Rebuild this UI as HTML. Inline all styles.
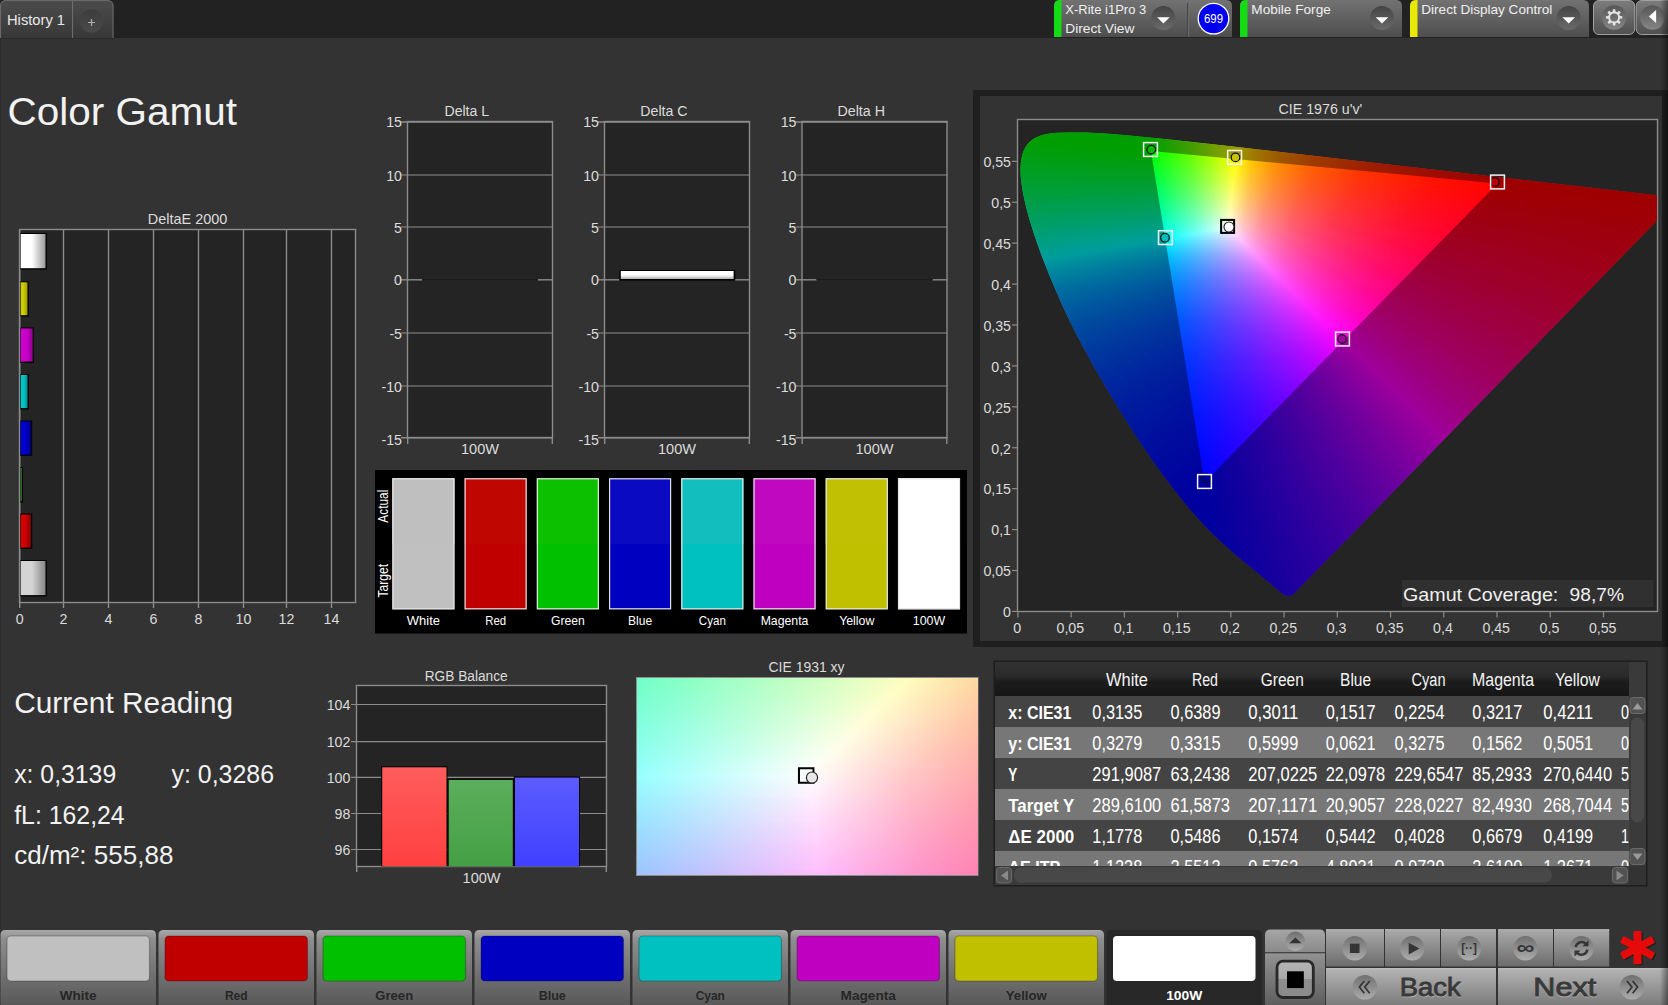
<!DOCTYPE html>
<html><head><meta charset="utf-8"><title>Color Gamut</title>
<style>
html,body{margin:0;padding:0;background:#333333;}
body{width:1668px;height:1005px;position:relative;overflow:hidden;font-family:"Liberation Sans",sans-serif;}
svg{position:absolute;left:0;top:0;font-family:"Liberation Sans",sans-serif;}
.cie{position:absolute;overflow:hidden;}
.cie i{display:block;}

</style></head><body>
<svg width="1668" height="1005" viewBox="0 0 1668 1005">
<defs><linearGradient id="tab" x1="0" y1="0" x2="0" y2="1"><stop offset="0" stop-color="#4c4c4c"/><stop offset="1" stop-color="#383838"/></linearGradient><radialGradient id="plus" cx="0.5" cy="0.3" r="0.7"><stop offset="0" stop-color="#3a3a3a"/><stop offset="1" stop-color="#444444"/></radialGradient><linearGradient id="plusl" x1="0" y1="0" x2="0" y2="1"><stop offset="0" stop-color="#3c3c3c"/><stop offset="1" stop-color="#4a4a4a"/></linearGradient><linearGradient id="btn" x1="0" y1="0" x2="0" y2="1"><stop offset="0" stop-color="#727272"/><stop offset="1" stop-color="#4e4e4e"/></linearGradient><linearGradient id="dd" x1="0" y1="0" x2="0" y2="1"><stop offset="0" stop-color="#444444"/><stop offset="1" stop-color="#6a6a6a"/></linearGradient><linearGradient id="btn2" x1="0" y1="0" x2="0" y2="1"><stop offset="0" stop-color="#7c7c7c"/><stop offset="1" stop-color="#505050"/></linearGradient><linearGradient id="rb" x1="0" y1="0" x2="0" y2="1"><stop offset="0" stop-color="#565656"/><stop offset="1" stop-color="#868686"/></linearGradient><linearGradient id="b0" x1="0" y1="0" x2="1" y2="0"><stop offset="0" stop-color="#ffffff"/><stop offset="0.45" stop-color="#ffffff"/><stop offset="1" stop-color="#9a9a9a"/></linearGradient><linearGradient id="b1" x1="0" y1="0" x2="1" y2="0"><stop offset="0" stop-color="#cccc00"/><stop offset="0.45" stop-color="#cccc00"/><stop offset="1" stop-color="#989800"/></linearGradient><linearGradient id="b2" x1="0" y1="0" x2="1" y2="0"><stop offset="0" stop-color="#cc00cc"/><stop offset="0.45" stop-color="#cc00cc"/><stop offset="1" stop-color="#900090"/></linearGradient><linearGradient id="b3" x1="0" y1="0" x2="1" y2="0"><stop offset="0" stop-color="#00c4c4"/><stop offset="0.45" stop-color="#00c4c4"/><stop offset="1" stop-color="#009090"/></linearGradient><linearGradient id="b4" x1="0" y1="0" x2="1" y2="0"><stop offset="0" stop-color="#0000d0"/><stop offset="0.45" stop-color="#0000d0"/><stop offset="1" stop-color="#000088"/></linearGradient><linearGradient id="b5" x1="0" y1="0" x2="1" y2="0"><stop offset="0" stop-color="#50a850"/><stop offset="0.45" stop-color="#50a850"/><stop offset="1" stop-color="#388838"/></linearGradient><linearGradient id="b6" x1="0" y1="0" x2="1" y2="0"><stop offset="0" stop-color="#d00000"/><stop offset="0.45" stop-color="#d00000"/><stop offset="1" stop-color="#880000"/></linearGradient><linearGradient id="b7" x1="0" y1="0" x2="1" y2="0"><stop offset="0" stop-color="#d4d4d4"/><stop offset="0.45" stop-color="#d4d4d4"/><stop offset="1" stop-color="#868686"/></linearGradient><linearGradient id="dc" x1="0" y1="0" x2="0" y2="1"><stop offset="0" stop-color="#ffffff"/><stop offset="0.5" stop-color="#ffffff"/><stop offset="1" stop-color="#b0b0b0"/></linearGradient><linearGradient id="rr" x1="0" y1="0" x2="0" y2="1"><stop offset="0" stop-color="#ff5c5c"/><stop offset="1" stop-color="#ff4040"/></linearGradient><linearGradient id="gg" x1="0" y1="0" x2="0" y2="1"><stop offset="0" stop-color="#5cae5c"/><stop offset="1" stop-color="#44a044"/></linearGradient><linearGradient id="bb" x1="0" y1="0" x2="0" y2="1"><stop offset="0" stop-color="#5c5cff"/><stop offset="1" stop-color="#4040ff"/></linearGradient><linearGradient id="th" x1="0" y1="0" x2="0" y2="1"><stop offset="0" stop-color="#323232"/><stop offset="0.42" stop-color="#2a2a2a"/><stop offset="0.58" stop-color="#1c1c1c"/><stop offset="1" stop-color="#161616"/></linearGradient><linearGradient id="bb1" x1="0" y1="0" x2="0" y2="1"><stop offset="0" stop-color="#a8a8a8"/><stop offset="0.12" stop-color="#8e8e8e"/><stop offset="1" stop-color="#585858"/></linearGradient><linearGradient id="cb" x1="0" y1="0" x2="0" y2="1"><stop offset="0" stop-color="#aaaaaa"/><stop offset="1" stop-color="#6c6c6c"/></linearGradient><linearGradient id="cbt" x1="0" y1="0" x2="0" y2="1"><stop offset="0" stop-color="#a6a6a6"/><stop offset="1" stop-color="#8a8a8a"/></linearGradient><linearGradient id="cb2" x1="0" y1="0" x2="0" y2="1"><stop offset="0" stop-color="#929292"/><stop offset="1" stop-color="#5e5e5e"/></linearGradient><linearGradient id="ic" x1="0" y1="0" x2="0" y2="1"><stop offset="0" stop-color="#707070"/><stop offset="1" stop-color="#acacac"/></linearGradient><linearGradient id="si" x1="0" y1="0" x2="0" y2="1"><stop offset="0" stop-color="#b6b6b6"/><stop offset="0.5" stop-color="#a6a6a6"/><stop offset="0.5" stop-color="#8e8e8e"/><stop offset="1" stop-color="#8a8a8a"/></linearGradient><linearGradient id="bn" x1="0" y1="0" x2="0" y2="1"><stop offset="0" stop-color="#b4b4b4"/><stop offset="1" stop-color="#7a7a7a"/></linearGradient><linearGradient id="es" x1="0" y1="0" x2="1" y2="0"><stop offset="0" stop-color="#000" stop-opacity="0"/><stop offset="1" stop-color="#000" stop-opacity=".42"/></linearGradient></defs>
<rect x="0" y="0" width="1668" height="38" fill="#222222" />
<path d="M0 38V6Q0 0 6 0H107Q113.5 0 113.5 6V38Z" fill="url(#tab)"/>
<path d="M.5 38V6Q.5 .5 6 .5H107Q113 .5 113 6V38" fill="none" stroke="#6a6a6a" stroke-width="1"/>
<line x1="72.5" y1="1" x2="72.5" y2="38" stroke="#6e6e6e" stroke-width="1" />
<line x1="0" y1="38.5" x2="114" y2="38.5" stroke="#2a2a2a" stroke-width="1" />
<text x="7" y="25" font-size="14.5" fill="#e8e8e8" textLength="58" lengthAdjust="spacingAndGlyphs" >History 1</text>
<circle cx="91.5" cy="21" r="11.5" fill="url(#plusl)"/>
<path d="M88 22.5h7M91.5 19v7" stroke="#b0b0b0" stroke-width="1.2" fill="none"/>
<path d="M1054 37V6Q1054 0 1060 0H1226Q1232 0 1232 6V37Z" fill="url(#btn)"/>
<path d="M1054 37V6Q1054 0 1060 0H1061.5V37Z" fill="#14dc14"/>
<circle cx="1163.4" cy="18" r="12" fill="url(#dd)"/>
<path d="M1157.1000000000001 17.2h12.6l-6.3 6.2z" fill="#ffffff"/>
<text x="1065.3" y="13.6" font-size="13" fill="#f0f0f0" textLength="81" lengthAdjust="spacingAndGlyphs" >X-Rite i1Pro 3</text>
<text x="1065.3" y="33" font-size="13" fill="#f0f0f0" textLength="69" lengthAdjust="spacingAndGlyphs" >Direct View</text>
<line x1="1187.5" y1="3" x2="1187.5" y2="37" stroke="#444444" stroke-width="1" />
<line x1="1188.5" y1="3" x2="1188.5" y2="37" stroke="#6c6c6c" stroke-width="1" />
<circle cx="1213.5" cy="18.6" r="15.3" fill="#0000ee" stroke="#ffffff" stroke-width="1.3"/>
<text x="1213.5" y="23" font-size="12" fill="#ffffff" text-anchor="middle" textLength="19" lengthAdjust="spacingAndGlyphs" >699</text>
<path d="M1240 37V6Q1240 0 1246 0H1396Q1402 0 1402 6V37Z" fill="url(#btn)"/>
<path d="M1240 37V6Q1240 0 1246 0H1247.5V37Z" fill="#14dc14"/>
<circle cx="1382" cy="18" r="12" fill="url(#dd)"/>
<path d="M1375.7 17.2h12.6l-6.3 6.2z" fill="#ffffff"/>
<text x="1251.3" y="13.6" font-size="13" fill="#f0f0f0" textLength="79.5" lengthAdjust="spacingAndGlyphs" >Mobile Forge</text>
<path d="M1410 37V6Q1410 0 1416 0H1583Q1589 0 1589 6V37Z" fill="url(#btn)"/>
<path d="M1410 37V6Q1410 0 1416 0H1417.5V37Z" fill="#e8e800"/>
<circle cx="1568.7" cy="18" r="12" fill="url(#dd)"/>
<path d="M1562.4 17.2h12.6l-6.3 6.2z" fill="#ffffff"/>
<text x="1421.3" y="13.6" font-size="13" fill="#f0f0f0" textLength="131" lengthAdjust="spacingAndGlyphs" >Direct Display Control</text>
<rect x="1593.5" y=".5" width="41.2" height="34" rx="5.5" fill="url(#btn2)" stroke="#a0a0a0" stroke-width="1"/>
<rect x="1636.2" y=".5" width="41" height="34" rx="5.5" fill="url(#btn2)" stroke="#a0a0a0" stroke-width="1"/>
<circle cx="1614.1" cy="17.5" r="12.2" fill="url(#rb)"/>
<circle cx="1652.4" cy="17.5" r="12.2" fill="url(#rb)"/>
<path d="M1619.93 16L1622.32 16.23L1622.32 18.57L1619.93 18.8L1619.22 20.53L1620.74 22.38L1619.08 24.04L1617.23 22.52L1615.5 23.23L1615.27 25.62L1612.93 25.62L1612.7 23.23L1610.97 22.52L1609.12 24.04L1607.46 22.38L1608.98 20.53L1608.27 18.8L1605.88 18.57L1605.88 16.23L1608.27 16L1608.98 14.27L1607.46 12.42L1609.12 10.76L1610.97 12.28L1612.7 11.57L1612.93 9.18L1615.27 9.18L1615.5 11.57L1617.23 12.28L1619.08 10.76L1620.74 12.42L1619.22 14.27ZM1618.1 17.4A4 4 0 1 0 1610.1 17.4A4 4 0 1 0 1618.1 17.4Z" fill="#e4e4e4" fill-rule="evenodd"/>
<path d="M1648.9 16.5l7.2-6.6v13.2z" fill="#ffffff"/>
<text x="7.5" y="125.2" font-size="38" fill="#f2f2f2" textLength="229.5" lengthAdjust="spacingAndGlyphs" >Color Gamut</text>
<text x="187.6" y="224.3" font-size="13.9" fill="#dcdcdc" text-anchor="middle" textLength="79.5" lengthAdjust="spacingAndGlyphs" >DeltaE 2000</text>
<rect x="19" y="229" width="337" height="374" fill="#242424" />
<line x1="63.5" y1="229" x2="63.5" y2="608" stroke="#8c8c8c" stroke-width="1.4" />
<line x1="108.5" y1="229" x2="108.5" y2="608" stroke="#8c8c8c" stroke-width="1.4" />
<line x1="153.5" y1="229" x2="153.5" y2="608" stroke="#8c8c8c" stroke-width="1.4" />
<line x1="198.5" y1="229" x2="198.5" y2="608" stroke="#8c8c8c" stroke-width="1.4" />
<line x1="243.5" y1="229" x2="243.5" y2="608" stroke="#8c8c8c" stroke-width="1.4" />
<line x1="286.5" y1="229" x2="286.5" y2="608" stroke="#8c8c8c" stroke-width="1.4" />
<line x1="331.5" y1="229" x2="331.5" y2="608" stroke="#8c8c8c" stroke-width="1.4" />
<line x1="19.7" y1="229" x2="19.7" y2="608" stroke="#8c8c8c" stroke-width="1.4" />
<rect x="19.5" y="229.5" width="336" height="373" fill="none" stroke="#8c8c8c" stroke-width="1.4"/>
<text x="19.7" y="624.3" font-size="14.2" fill="#dcdcdc" text-anchor="middle" >0</text>
<text x="63.5" y="624.3" font-size="14.2" fill="#dcdcdc" text-anchor="middle" >2</text>
<text x="108.5" y="624.3" font-size="14.2" fill="#dcdcdc" text-anchor="middle" >4</text>
<text x="153.5" y="624.3" font-size="14.2" fill="#dcdcdc" text-anchor="middle" >6</text>
<text x="198.5" y="624.3" font-size="14.2" fill="#dcdcdc" text-anchor="middle" >8</text>
<text x="243.5" y="624.3" font-size="14.2" fill="#dcdcdc" text-anchor="middle" >10</text>
<text x="286.5" y="624.3" font-size="14.2" fill="#dcdcdc" text-anchor="middle" >12</text>
<text x="331.5" y="624.3" font-size="14.2" fill="#dcdcdc" text-anchor="middle" >14</text>
<rect x="20.4" y="233" width="26.4" height="36.6" fill="#000000" />
<rect x="20.7" y="234" width="24.8" height="34.2" fill="url(#b0)" />
<rect x="20.4" y="281.3" width="8.4" height="35.3" fill="#000000" />
<rect x="20.7" y="282.3" width="6.8" height="32.9" fill="url(#b1)" />
<rect x="20.4" y="327.5" width="13.6" height="35.5" fill="#000000" />
<rect x="20.7" y="328.5" width="12" height="33.1" fill="url(#b2)" />
<rect x="20.4" y="374" width="8.4" height="35.5" fill="#000000" />
<rect x="20.7" y="375" width="6.8" height="33.1" fill="url(#b3)" />
<rect x="20.4" y="420.5" width="11.8" height="35.5" fill="#000000" />
<rect x="20.7" y="421.5" width="10.2" height="33.1" fill="url(#b4)" />
<rect x="20.4" y="467" width="2.6" height="35.5" fill="#000000" />
<rect x="20.7" y="468" width="1" height="33.1" fill="url(#b5)" />
<rect x="20.4" y="513.5" width="11.8" height="35.5" fill="#000000" />
<rect x="20.7" y="514.5" width="10.2" height="33.1" fill="url(#b6)" />
<rect x="20.4" y="560" width="26.4" height="36.5" fill="#000000" />
<rect x="20.7" y="561" width="24.8" height="34.1" fill="url(#b7)" />
<rect x="407" y="121" width="146" height="317" fill="#242424" />
<line x1="401" y1="122" x2="553" y2="122" stroke="#8c8c8c" stroke-width="1.4" />
<text x="402" y="127" font-size="14.2" fill="#dcdcdc" text-anchor="end" >15</text>
<line x1="401" y1="175" x2="553" y2="175" stroke="#8c8c8c" stroke-width="1.2" />
<text x="402" y="180.5" font-size="14.2" fill="#dcdcdc" text-anchor="end" >10</text>
<line x1="401" y1="227" x2="553" y2="227" stroke="#8c8c8c" stroke-width="1.2" />
<text x="402" y="232.5" font-size="14.2" fill="#dcdcdc" text-anchor="end" >5</text>
<line x1="401" y1="279.8" x2="422" y2="279.8" stroke="#8c8c8c" stroke-width="1.4" />
<line x1="538" y1="279.8" x2="553" y2="279.8" stroke="#8c8c8c" stroke-width="1.4" />
<line x1="422" y1="279.5" x2="538" y2="279.5" stroke="#1c1c1c" stroke-width="1.2" />
<text x="402" y="285.3" font-size="14.2" fill="#dcdcdc" text-anchor="end" >0</text>
<line x1="401" y1="333" x2="553" y2="333" stroke="#8c8c8c" stroke-width="1.2" />
<text x="402" y="338.5" font-size="14.2" fill="#dcdcdc" text-anchor="end" >-5</text>
<line x1="401" y1="386" x2="553" y2="386" stroke="#8c8c8c" stroke-width="1.2" />
<text x="402" y="391.5" font-size="14.2" fill="#dcdcdc" text-anchor="end" >-10</text>
<line x1="401" y1="437.8" x2="553" y2="437.8" stroke="#8c8c8c" stroke-width="1.4" />
<text x="402" y="444.8" font-size="14.2" fill="#dcdcdc" text-anchor="end" >-15</text>
<rect x="407.5" y="121.5" width="145" height="316" fill="none" stroke="#8c8c8c" stroke-width="1.4"/>
<line x1="407.7" y1="438" x2="407.7" y2="444" stroke="#8c8c8c" stroke-width="1.4" />
<line x1="552.3" y1="438" x2="552.3" y2="444" stroke="#8c8c8c" stroke-width="1.4" />
<text x="466.8" y="116.3" font-size="14" fill="#dcdcdc" text-anchor="middle" textLength="44.7" lengthAdjust="spacingAndGlyphs" >Delta L</text>
<text x="480" y="454" font-size="14.5" fill="#dcdcdc" text-anchor="middle" textLength="38" lengthAdjust="spacingAndGlyphs" >100W</text>
<rect x="604" y="121" width="146" height="317" fill="#242424" />
<line x1="598" y1="122" x2="750" y2="122" stroke="#8c8c8c" stroke-width="1.4" />
<text x="599" y="127" font-size="14.2" fill="#dcdcdc" text-anchor="end" >15</text>
<line x1="598" y1="175" x2="750" y2="175" stroke="#8c8c8c" stroke-width="1.2" />
<text x="599" y="180.5" font-size="14.2" fill="#dcdcdc" text-anchor="end" >10</text>
<line x1="598" y1="227" x2="750" y2="227" stroke="#8c8c8c" stroke-width="1.2" />
<text x="599" y="232.5" font-size="14.2" fill="#dcdcdc" text-anchor="end" >5</text>
<line x1="598" y1="279.8" x2="619" y2="279.8" stroke="#8c8c8c" stroke-width="1.4" />
<line x1="735" y1="279.8" x2="750" y2="279.8" stroke="#8c8c8c" stroke-width="1.4" />
<line x1="619" y1="279.5" x2="735" y2="279.5" stroke="#1c1c1c" stroke-width="1.2" />
<text x="599" y="285.3" font-size="14.2" fill="#dcdcdc" text-anchor="end" >0</text>
<line x1="598" y1="333" x2="750" y2="333" stroke="#8c8c8c" stroke-width="1.2" />
<text x="599" y="338.5" font-size="14.2" fill="#dcdcdc" text-anchor="end" >-5</text>
<line x1="598" y1="386" x2="750" y2="386" stroke="#8c8c8c" stroke-width="1.2" />
<text x="599" y="391.5" font-size="14.2" fill="#dcdcdc" text-anchor="end" >-10</text>
<line x1="598" y1="437.8" x2="750" y2="437.8" stroke="#8c8c8c" stroke-width="1.4" />
<text x="599" y="444.8" font-size="14.2" fill="#dcdcdc" text-anchor="end" >-15</text>
<rect x="604.5" y="121.5" width="145" height="316" fill="none" stroke="#8c8c8c" stroke-width="1.4"/>
<line x1="604.7" y1="438" x2="604.7" y2="444" stroke="#8c8c8c" stroke-width="1.4" />
<line x1="749.3" y1="438" x2="749.3" y2="444" stroke="#8c8c8c" stroke-width="1.4" />
<text x="663.9" y="116.3" font-size="14" fill="#dcdcdc" text-anchor="middle" textLength="47.2" lengthAdjust="spacingAndGlyphs" >Delta C</text>
<text x="677" y="454" font-size="14.5" fill="#dcdcdc" text-anchor="middle" textLength="38" lengthAdjust="spacingAndGlyphs" >100W</text>
<rect x="801.5" y="121" width="146" height="317" fill="#242424" />
<line x1="795.5" y1="122" x2="947.5" y2="122" stroke="#8c8c8c" stroke-width="1.4" />
<text x="796.5" y="127" font-size="14.2" fill="#dcdcdc" text-anchor="end" >15</text>
<line x1="795.5" y1="175" x2="947.5" y2="175" stroke="#8c8c8c" stroke-width="1.2" />
<text x="796.5" y="180.5" font-size="14.2" fill="#dcdcdc" text-anchor="end" >10</text>
<line x1="795.5" y1="227" x2="947.5" y2="227" stroke="#8c8c8c" stroke-width="1.2" />
<text x="796.5" y="232.5" font-size="14.2" fill="#dcdcdc" text-anchor="end" >5</text>
<line x1="795.5" y1="279.8" x2="816.5" y2="279.8" stroke="#8c8c8c" stroke-width="1.4" />
<line x1="932.5" y1="279.8" x2="947.5" y2="279.8" stroke="#8c8c8c" stroke-width="1.4" />
<line x1="816.5" y1="279.5" x2="932.5" y2="279.5" stroke="#1c1c1c" stroke-width="1.2" />
<text x="796.5" y="285.3" font-size="14.2" fill="#dcdcdc" text-anchor="end" >0</text>
<line x1="795.5" y1="333" x2="947.5" y2="333" stroke="#8c8c8c" stroke-width="1.2" />
<text x="796.5" y="338.5" font-size="14.2" fill="#dcdcdc" text-anchor="end" >-5</text>
<line x1="795.5" y1="386" x2="947.5" y2="386" stroke="#8c8c8c" stroke-width="1.2" />
<text x="796.5" y="391.5" font-size="14.2" fill="#dcdcdc" text-anchor="end" >-10</text>
<line x1="795.5" y1="437.8" x2="947.5" y2="437.8" stroke="#8c8c8c" stroke-width="1.4" />
<text x="796.5" y="444.8" font-size="14.2" fill="#dcdcdc" text-anchor="end" >-15</text>
<rect x="802" y="121.5" width="145" height="316" fill="none" stroke="#8c8c8c" stroke-width="1.4"/>
<line x1="802.2" y1="438" x2="802.2" y2="444" stroke="#8c8c8c" stroke-width="1.4" />
<line x1="946.8" y1="438" x2="946.8" y2="444" stroke="#8c8c8c" stroke-width="1.4" />
<text x="861.2" y="116.3" font-size="14" fill="#dcdcdc" text-anchor="middle" textLength="47.5" lengthAdjust="spacingAndGlyphs" >Delta H</text>
<text x="874.5" y="454" font-size="14.5" fill="#dcdcdc" text-anchor="middle" textLength="38" lengthAdjust="spacingAndGlyphs" >100W</text>
<rect x="619.5" y="270" width="115.8" height="10.6" fill="#000000" />
<rect x="620.8" y="271" width="112.8" height="8" fill="url(#dc)" />
<rect x="375" y="470" width="592" height="163.5" fill="#000000" />
<rect x="392.4" y="478.3" width="62" height="131" fill="#c0c0c0" />
<rect x="392.4" y="478.3" width="62" height="65.7" fill="#c0bfbf" />
<rect x="392.9" y="478.8" width="61" height="130" fill="none" stroke="#e4e4e4" stroke-width="1.2"/>
<text x="423.4" y="625" font-size="13.5" fill="#ffffff" text-anchor="middle" textLength="33.1" lengthAdjust="spacingAndGlyphs" >White</text>
<rect x="464.63" y="478.3" width="62" height="131" fill="#c00000" />
<rect x="464.63" y="478.3" width="62" height="65.7" fill="#c00600" />
<rect x="465.13" y="478.8" width="61" height="130" fill="none" stroke="#e4e4e4" stroke-width="1.2"/>
<text x="495.63" y="625" font-size="13.5" fill="#ffffff" text-anchor="middle" textLength="20.9" lengthAdjust="spacingAndGlyphs" >Red</text>
<rect x="536.86" y="478.3" width="62" height="131" fill="#00c000" />
<rect x="536.86" y="478.3" width="62" height="65.7" fill="#0cc000" />
<rect x="537.36" y="478.8" width="61" height="130" fill="none" stroke="#e4e4e4" stroke-width="1.2"/>
<text x="567.86" y="625" font-size="13.5" fill="#ffffff" text-anchor="middle" textLength="33.8" lengthAdjust="spacingAndGlyphs" >Green</text>
<rect x="609.09" y="478.3" width="62" height="131" fill="#0000c0" />
<rect x="609.09" y="478.3" width="62" height="65.7" fill="#0a0ac2" />
<rect x="609.59" y="478.8" width="61" height="130" fill="none" stroke="#e4e4e4" stroke-width="1.2"/>
<text x="640.09" y="625" font-size="13.5" fill="#ffffff" text-anchor="middle" textLength="24.1" lengthAdjust="spacingAndGlyphs" >Blue</text>
<rect x="681.32" y="478.3" width="62" height="131" fill="#00c0c0" />
<rect x="681.32" y="478.3" width="62" height="65.7" fill="#12bebe" />
<rect x="681.82" y="478.8" width="61" height="130" fill="none" stroke="#e4e4e4" stroke-width="1.2"/>
<text x="712.32" y="625" font-size="13.5" fill="#ffffff" text-anchor="middle" textLength="27" lengthAdjust="spacingAndGlyphs" >Cyan</text>
<rect x="753.55" y="478.3" width="62" height="131" fill="#c000c0" />
<rect x="753.55" y="478.3" width="62" height="65.7" fill="#c008c0" />
<rect x="754.05" y="478.8" width="61" height="130" fill="none" stroke="#e4e4e4" stroke-width="1.2"/>
<text x="784.55" y="625" font-size="13.5" fill="#ffffff" text-anchor="middle" textLength="47.8" lengthAdjust="spacingAndGlyphs" >Magenta</text>
<rect x="825.78" y="478.3" width="62" height="131" fill="#c0c000" />
<rect x="825.78" y="478.3" width="62" height="65.7" fill="#c2c002" />
<rect x="826.28" y="478.8" width="61" height="130" fill="none" stroke="#e4e4e4" stroke-width="1.2"/>
<text x="856.78" y="625" font-size="13.5" fill="#ffffff" text-anchor="middle" textLength="35.3" lengthAdjust="spacingAndGlyphs" >Yellow</text>
<rect x="898.01" y="478.3" width="62" height="131" fill="#ffffff" />
<rect x="898.01" y="478.3" width="62" height="65.7" fill="#ffffff" />
<rect x="898.51" y="478.8" width="61" height="130" fill="none" stroke="#e4e4e4" stroke-width="1.2"/>
<text x="929.01" y="625" font-size="13.5" fill="#ffffff" text-anchor="middle" textLength="32.4" lengthAdjust="spacingAndGlyphs" >100W</text>
<text transform="translate(388.3,522.7) rotate(-90)" font-size="14" fill="#ffffff" textLength="33" lengthAdjust="spacingAndGlyphs">Actual</text>
<text transform="translate(388.3,597.5) rotate(-90)" font-size="14" fill="#ffffff" textLength="33.5" lengthAdjust="spacingAndGlyphs">Target</text>
<text x="14.2" y="713.3" font-size="29.5" fill="#f2f2f2" textLength="219" lengthAdjust="spacingAndGlyphs" >Current Reading</text>
<text x="14.2" y="783.2" font-size="25" fill="#f2f2f2" textLength="102" lengthAdjust="spacingAndGlyphs" >x: 0,3139</text>
<text x="171.5" y="783.2" font-size="25" fill="#f2f2f2" textLength="102.5" lengthAdjust="spacingAndGlyphs" >y: 0,3286</text>
<text x="14.2" y="823.8" font-size="25" fill="#f2f2f2" textLength="110.5" lengthAdjust="spacingAndGlyphs" >fL: 162,24</text>
<text x="14.2" y="864" font-size="25" fill="#f2f2f2" textLength="159.2" lengthAdjust="spacingAndGlyphs" >cd/m²: 555,88</text>
<text x="466.2" y="680.7" font-size="14" fill="#dcdcdc" text-anchor="middle" textLength="83" lengthAdjust="spacingAndGlyphs" >RGB Balance</text>
<rect x="356" y="685" width="251" height="182" fill="#242424" />
<line x1="351" y1="704.5" x2="607" y2="704.5" stroke="#8c8c8c" stroke-width="1.2" />
<text x="350.3" y="710" font-size="14.2" fill="#dcdcdc" text-anchor="end" >104</text>
<line x1="351" y1="741.7" x2="607" y2="741.7" stroke="#8c8c8c" stroke-width="1.2" />
<text x="350.3" y="747.2" font-size="14.2" fill="#dcdcdc" text-anchor="end" >102</text>
<line x1="351" y1="777.4" x2="607" y2="777.4" stroke="#8c8c8c" stroke-width="1.2" />
<text x="350.3" y="782.9" font-size="14.2" fill="#dcdcdc" text-anchor="end" >100</text>
<line x1="351" y1="813.5" x2="607" y2="813.5" stroke="#8c8c8c" stroke-width="1.2" />
<text x="350.3" y="819" font-size="14.2" fill="#dcdcdc" text-anchor="end" >98</text>
<line x1="351" y1="849.5" x2="607" y2="849.5" stroke="#8c8c8c" stroke-width="1.2" />
<text x="350.3" y="855" font-size="14.2" fill="#dcdcdc" text-anchor="end" >96</text>
<rect x="356.5" y="685.5" width="250" height="181" fill="none" stroke="#8c8c8c" stroke-width="1.4"/>
<line x1="356.7" y1="867" x2="356.7" y2="872" stroke="#8c8c8c" stroke-width="1.4" />
<line x1="606.3" y1="867" x2="606.3" y2="872" stroke="#8c8c8c" stroke-width="1.4" />
<rect x="381" y="766" width="66.5" height="100.3" fill="#000000" />
<rect x="382.2" y="767.3" width="64.3" height="99" fill="url(#rr)" />
<rect x="447.5" y="778.6" width="66.3" height="87.7" fill="#000000" />
<rect x="448.7" y="779.9" width="64.1" height="86.4" fill="url(#gg)" />
<rect x="513.8" y="776.3" width="66.2" height="90" fill="#000000" />
<rect x="515" y="777.6" width="64" height="88.7" fill="url(#bb)" />
<text x="481.6" y="883.3" font-size="14.5" fill="#dcdcdc" text-anchor="middle" textLength="38" lengthAdjust="spacingAndGlyphs" >100W</text>
<text x="806.5" y="671.5" font-size="14" fill="#dcdcdc" text-anchor="middle" textLength="76" lengthAdjust="spacingAndGlyphs" >CIE 1931 xy</text>
<rect x="636" y="677" width="342.5" height="199" fill="#8c8c8c" />
<rect x="993.5" y="660.5" width="654" height="226" fill="#1e1e1e" />
<rect x="995" y="662" width="651" height="223" fill="#2b2b2b" />
<rect x="995" y="662" width="634" height="34" fill="url(#th)" />
<text x="1127" y="686" font-size="18" fill="#f4f4f4" text-anchor="middle" textLength="42" lengthAdjust="spacingAndGlyphs" >White</text>
<text x="1205" y="686" font-size="18" fill="#f4f4f4" text-anchor="middle" textLength="26" lengthAdjust="spacingAndGlyphs" >Red</text>
<text x="1282.3" y="686" font-size="18" fill="#f4f4f4" text-anchor="middle" textLength="43" lengthAdjust="spacingAndGlyphs" >Green</text>
<text x="1355.6" y="686" font-size="18" fill="#f4f4f4" text-anchor="middle" textLength="31" lengthAdjust="spacingAndGlyphs" >Blue</text>
<text x="1428.5" y="686" font-size="18" fill="#f4f4f4" text-anchor="middle" textLength="34" lengthAdjust="spacingAndGlyphs" >Cyan</text>
<text x="1503" y="686" font-size="18" fill="#f4f4f4" text-anchor="middle" textLength="62" lengthAdjust="spacingAndGlyphs" >Magenta</text>
<text x="1577.5" y="686" font-size="18" fill="#f4f4f4" text-anchor="middle" textLength="45" lengthAdjust="spacingAndGlyphs" >Yellow</text>
<clipPath id="tc"><rect x="995" y="696" width="634" height="170"/></clipPath>
<g clip-path="url(#tc)">
<rect x="995" y="696" width="635" height="31" fill="#444444" />
<text x="1008.3" y="719.4" font-size="19" fill="#ffffff" font-weight="bold" textLength="63" lengthAdjust="spacingAndGlyphs" >x: CIE31</text>
<text x="1092.3" y="719.4" font-size="19.6" fill="#ffffff" textLength="50" lengthAdjust="spacingAndGlyphs" >0,3135</text>
<text x="1170.5" y="719.4" font-size="19.6" fill="#ffffff" textLength="50" lengthAdjust="spacingAndGlyphs" >0,6389</text>
<text x="1248.3" y="719.4" font-size="19.6" fill="#ffffff" textLength="50" lengthAdjust="spacingAndGlyphs" >0,3011</text>
<text x="1325.7" y="719.4" font-size="19.6" fill="#ffffff" textLength="50" lengthAdjust="spacingAndGlyphs" >0,1517</text>
<text x="1394.5" y="719.4" font-size="19.6" fill="#ffffff" textLength="50" lengthAdjust="spacingAndGlyphs" >0,2254</text>
<text x="1472.3" y="719.4" font-size="19.6" fill="#ffffff" textLength="50" lengthAdjust="spacingAndGlyphs" >0,3217</text>
<text x="1543.2" y="719.4" font-size="19.6" fill="#ffffff" textLength="50" lengthAdjust="spacingAndGlyphs" >0,4211</text>
<text x="1621" y="719.4" font-size="19.6" fill="#ffffff" textLength="8" lengthAdjust="spacingAndGlyphs" >0</text>
<rect x="995" y="727" width="635" height="31" fill="#777777" />
<text x="1008.3" y="750.4" font-size="19" fill="#ffffff" font-weight="bold" textLength="63" lengthAdjust="spacingAndGlyphs" >y: CIE31</text>
<text x="1092.3" y="750.4" font-size="19.6" fill="#ffffff" textLength="50" lengthAdjust="spacingAndGlyphs" >0,3279</text>
<text x="1170.5" y="750.4" font-size="19.6" fill="#ffffff" textLength="50" lengthAdjust="spacingAndGlyphs" >0,3315</text>
<text x="1248.3" y="750.4" font-size="19.6" fill="#ffffff" textLength="50" lengthAdjust="spacingAndGlyphs" >0,5999</text>
<text x="1325.7" y="750.4" font-size="19.6" fill="#ffffff" textLength="50" lengthAdjust="spacingAndGlyphs" >0,0621</text>
<text x="1394.5" y="750.4" font-size="19.6" fill="#ffffff" textLength="50" lengthAdjust="spacingAndGlyphs" >0,3275</text>
<text x="1472.3" y="750.4" font-size="19.6" fill="#ffffff" textLength="50" lengthAdjust="spacingAndGlyphs" >0,1562</text>
<text x="1543.2" y="750.4" font-size="19.6" fill="#ffffff" textLength="50" lengthAdjust="spacingAndGlyphs" >0,5051</text>
<text x="1621" y="750.4" font-size="19.6" fill="#ffffff" textLength="8" lengthAdjust="spacingAndGlyphs" >0</text>
<rect x="995" y="758" width="635" height="31" fill="#444444" />
<text x="1008.3" y="781.4" font-size="19" fill="#ffffff" font-weight="bold" textLength="9" lengthAdjust="spacingAndGlyphs" >Y</text>
<text x="1092.3" y="781.4" font-size="19.6" fill="#ffffff" textLength="69" lengthAdjust="spacingAndGlyphs" >291,9087</text>
<text x="1170.5" y="781.4" font-size="19.6" fill="#ffffff" textLength="59.5" lengthAdjust="spacingAndGlyphs" >63,2438</text>
<text x="1248.3" y="781.4" font-size="19.6" fill="#ffffff" textLength="69" lengthAdjust="spacingAndGlyphs" >207,0225</text>
<text x="1325.7" y="781.4" font-size="19.6" fill="#ffffff" textLength="59.5" lengthAdjust="spacingAndGlyphs" >22,0978</text>
<text x="1394.5" y="781.4" font-size="19.6" fill="#ffffff" textLength="69" lengthAdjust="spacingAndGlyphs" >229,6547</text>
<text x="1472.3" y="781.4" font-size="19.6" fill="#ffffff" textLength="59.5" lengthAdjust="spacingAndGlyphs" >85,2933</text>
<text x="1543.2" y="781.4" font-size="19.6" fill="#ffffff" textLength="69" lengthAdjust="spacingAndGlyphs" >270,6440</text>
<text x="1621" y="781.4" font-size="19.6" fill="#ffffff" textLength="8" lengthAdjust="spacingAndGlyphs" >5</text>
<rect x="995" y="789" width="635" height="31" fill="#777777" />
<text x="1008.3" y="812.4" font-size="19" fill="#ffffff" font-weight="bold" textLength="66" lengthAdjust="spacingAndGlyphs" >Target Y</text>
<text x="1092.3" y="812.4" font-size="19.6" fill="#ffffff" textLength="69" lengthAdjust="spacingAndGlyphs" >289,6100</text>
<text x="1170.5" y="812.4" font-size="19.6" fill="#ffffff" textLength="59.5" lengthAdjust="spacingAndGlyphs" >61,5873</text>
<text x="1248.3" y="812.4" font-size="19.6" fill="#ffffff" textLength="69" lengthAdjust="spacingAndGlyphs" >207,1171</text>
<text x="1325.7" y="812.4" font-size="19.6" fill="#ffffff" textLength="59.5" lengthAdjust="spacingAndGlyphs" >20,9057</text>
<text x="1394.5" y="812.4" font-size="19.6" fill="#ffffff" textLength="69" lengthAdjust="spacingAndGlyphs" >228,0227</text>
<text x="1472.3" y="812.4" font-size="19.6" fill="#ffffff" textLength="59.5" lengthAdjust="spacingAndGlyphs" >82,4930</text>
<text x="1543.2" y="812.4" font-size="19.6" fill="#ffffff" textLength="69" lengthAdjust="spacingAndGlyphs" >268,7044</text>
<text x="1621" y="812.4" font-size="19.6" fill="#ffffff" textLength="8" lengthAdjust="spacingAndGlyphs" >5</text>
<rect x="995" y="820" width="635" height="31" fill="#444444" />
<text x="1008.3" y="843.4" font-size="19" fill="#ffffff" font-weight="bold" textLength="66" lengthAdjust="spacingAndGlyphs" >ΔE 2000</text>
<text x="1092.3" y="843.4" font-size="19.6" fill="#ffffff" textLength="50" lengthAdjust="spacingAndGlyphs" >1,1778</text>
<text x="1170.5" y="843.4" font-size="19.6" fill="#ffffff" textLength="50" lengthAdjust="spacingAndGlyphs" >0,5486</text>
<text x="1248.3" y="843.4" font-size="19.6" fill="#ffffff" textLength="50" lengthAdjust="spacingAndGlyphs" >0,1574</text>
<text x="1325.7" y="843.4" font-size="19.6" fill="#ffffff" textLength="50" lengthAdjust="spacingAndGlyphs" >0,5442</text>
<text x="1394.5" y="843.4" font-size="19.6" fill="#ffffff" textLength="50" lengthAdjust="spacingAndGlyphs" >0,4028</text>
<text x="1472.3" y="843.4" font-size="19.6" fill="#ffffff" textLength="50" lengthAdjust="spacingAndGlyphs" >0,6679</text>
<text x="1543.2" y="843.4" font-size="19.6" fill="#ffffff" textLength="50" lengthAdjust="spacingAndGlyphs" >0,4199</text>
<text x="1621" y="843.4" font-size="19.6" fill="#ffffff" textLength="8" lengthAdjust="spacingAndGlyphs" >1</text>
<rect x="995" y="851" width="635" height="31" fill="#777777" />
<text x="1008.3" y="874.4" font-size="19" fill="#ffffff" font-weight="bold" textLength="52" lengthAdjust="spacingAndGlyphs" >ΔE ITP</text>
<text x="1092.3" y="874.4" font-size="19.6" fill="#ffffff" textLength="50" lengthAdjust="spacingAndGlyphs" >1,1238</text>
<text x="1170.5" y="874.4" font-size="19.6" fill="#ffffff" textLength="50" lengthAdjust="spacingAndGlyphs" >2,5513</text>
<text x="1248.3" y="874.4" font-size="19.6" fill="#ffffff" textLength="50" lengthAdjust="spacingAndGlyphs" >0,5763</text>
<text x="1325.7" y="874.4" font-size="19.6" fill="#ffffff" textLength="50" lengthAdjust="spacingAndGlyphs" >4,8931</text>
<text x="1394.5" y="874.4" font-size="19.6" fill="#ffffff" textLength="50" lengthAdjust="spacingAndGlyphs" >0,9739</text>
<text x="1472.3" y="874.4" font-size="19.6" fill="#ffffff" textLength="50" lengthAdjust="spacingAndGlyphs" >2,6100</text>
<text x="1543.2" y="874.4" font-size="19.6" fill="#ffffff" textLength="50" lengthAdjust="spacingAndGlyphs" >1,2671</text>
<text x="1621" y="874.4" font-size="19.6" fill="#ffffff" textLength="8" lengthAdjust="spacingAndGlyphs" >0</text>
</g>
<rect x="995" y="866" width="634" height="19" fill="#3a3a3a" />
<rect x="1013.5" y="867.5" width="538.5" height="15" rx="7.5" fill="#484848"/>
<rect x="996.5" y="867.5" width="15" height="15.5" rx="3" fill="#525252" stroke="#6a6a6a" stroke-width="1"/>
<rect x="1612.5" y="867.5" width="15" height="15.5" rx="3" fill="#525252" stroke="#6a6a6a" stroke-width="1"/>
<path d="M1008 870.5v10l-7-5z" fill="#8a8a8a"/>
<path d="M1616.5 870.5v10l7-5z" fill="#8a8a8a"/>
<rect x="1629" y="662" width="17" height="204" fill="#3a3a3a" />
<rect x="1631" y="717.5" width="13" height="105" rx="6.5" fill="#484848"/>
<rect x="1630" y="697.5" width="15" height="16" rx="3" fill="#525252" stroke="#6a6a6a" stroke-width="1"/>
<rect x="1630" y="848.5" width="15" height="16" rx="3" fill="#525252" stroke="#6a6a6a" stroke-width="1"/>
<path d="M1632.5 709.5h10l-5-6.5z" fill="#9a9a9a"/>
<path d="M1632.5 853.5h10l-5 6.5z" fill="#9a9a9a"/>
<rect x="1629" y="866" width="17" height="19" fill="#333333" />
<rect x="973" y="90" width="695" height="557" fill="#1f1f1f" />
<rect x="980" y="96" width="682" height="545" fill="#333333" />
<text x="1320.4" y="113.5" font-size="14" fill="#dcdcdc" text-anchor="middle" textLength="83.7" lengthAdjust="spacingAndGlyphs" >CIE 1976 u'v'</text>
<rect x="1017" y="119" width="641" height="493" fill="#242424" />
<line x1="1017.9" y1="612" x2="1017.9" y2="617.5" stroke="#8c8c8c" stroke-width="1.2" />
<text x="1017.1" y="633" font-size="14.2" fill="#dcdcdc" text-anchor="middle" >0</text>
<line x1="1012" y1="611.4" x2="1017" y2="611.4" stroke="#8c8c8c" stroke-width="1.2" />
<text x="1011" y="617.2" font-size="14.2" fill="#dcdcdc" text-anchor="end" >0</text>
<line x1="1071.13" y1="612" x2="1071.13" y2="617.5" stroke="#8c8c8c" stroke-width="1.2" />
<text x="1070.34" y="633" font-size="14.2" fill="#dcdcdc" text-anchor="middle" >0,05</text>
<line x1="1012" y1="570.49" x2="1017" y2="570.49" stroke="#8c8c8c" stroke-width="1.2" />
<text x="1011" y="576.28" font-size="14.2" fill="#dcdcdc" text-anchor="end" >0,05</text>
<line x1="1124.37" y1="612" x2="1124.37" y2="617.5" stroke="#8c8c8c" stroke-width="1.2" />
<text x="1123.57" y="633" font-size="14.2" fill="#dcdcdc" text-anchor="middle" >0,1</text>
<line x1="1012" y1="529.57" x2="1017" y2="529.57" stroke="#8c8c8c" stroke-width="1.2" />
<text x="1011" y="535.37" font-size="14.2" fill="#dcdcdc" text-anchor="end" >0,1</text>
<line x1="1177.61" y1="612" x2="1177.61" y2="617.5" stroke="#8c8c8c" stroke-width="1.2" />
<text x="1176.81" y="633" font-size="14.2" fill="#dcdcdc" text-anchor="middle" >0,15</text>
<line x1="1012" y1="488.65" x2="1017" y2="488.65" stroke="#8c8c8c" stroke-width="1.2" />
<text x="1011" y="494.45" font-size="14.2" fill="#dcdcdc" text-anchor="end" >0,15</text>
<line x1="1230.84" y1="612" x2="1230.84" y2="617.5" stroke="#8c8c8c" stroke-width="1.2" />
<text x="1230.04" y="633" font-size="14.2" fill="#dcdcdc" text-anchor="middle" >0,2</text>
<line x1="1012" y1="447.74" x2="1017" y2="447.74" stroke="#8c8c8c" stroke-width="1.2" />
<text x="1011" y="453.54" font-size="14.2" fill="#dcdcdc" text-anchor="end" >0,2</text>
<line x1="1284.08" y1="612" x2="1284.08" y2="617.5" stroke="#8c8c8c" stroke-width="1.2" />
<text x="1283.28" y="633" font-size="14.2" fill="#dcdcdc" text-anchor="middle" >0,25</text>
<line x1="1012" y1="406.82" x2="1017" y2="406.82" stroke="#8c8c8c" stroke-width="1.2" />
<text x="1011" y="412.62" font-size="14.2" fill="#dcdcdc" text-anchor="end" >0,25</text>
<line x1="1337.31" y1="612" x2="1337.31" y2="617.5" stroke="#8c8c8c" stroke-width="1.2" />
<text x="1336.51" y="633" font-size="14.2" fill="#dcdcdc" text-anchor="middle" >0,3</text>
<line x1="1012" y1="365.91" x2="1017" y2="365.91" stroke="#8c8c8c" stroke-width="1.2" />
<text x="1011" y="371.71" font-size="14.2" fill="#dcdcdc" text-anchor="end" >0,3</text>
<line x1="1390.55" y1="612" x2="1390.55" y2="617.5" stroke="#8c8c8c" stroke-width="1.2" />
<text x="1389.75" y="633" font-size="14.2" fill="#dcdcdc" text-anchor="middle" >0,35</text>
<line x1="1012" y1="324.99" x2="1017" y2="324.99" stroke="#8c8c8c" stroke-width="1.2" />
<text x="1011" y="330.79" font-size="14.2" fill="#dcdcdc" text-anchor="end" >0,35</text>
<line x1="1443.78" y1="612" x2="1443.78" y2="617.5" stroke="#8c8c8c" stroke-width="1.2" />
<text x="1442.98" y="633" font-size="14.2" fill="#dcdcdc" text-anchor="middle" >0,4</text>
<line x1="1012" y1="284.08" x2="1017" y2="284.08" stroke="#8c8c8c" stroke-width="1.2" />
<text x="1011" y="289.88" font-size="14.2" fill="#dcdcdc" text-anchor="end" >0,4</text>
<line x1="1497.01" y1="612" x2="1497.01" y2="617.5" stroke="#8c8c8c" stroke-width="1.2" />
<text x="1496.21" y="633" font-size="14.2" fill="#dcdcdc" text-anchor="middle" >0,45</text>
<line x1="1012" y1="243.16" x2="1017" y2="243.16" stroke="#8c8c8c" stroke-width="1.2" />
<text x="1011" y="248.96" font-size="14.2" fill="#dcdcdc" text-anchor="end" >0,45</text>
<line x1="1550.25" y1="612" x2="1550.25" y2="617.5" stroke="#8c8c8c" stroke-width="1.2" />
<text x="1549.45" y="633" font-size="14.2" fill="#dcdcdc" text-anchor="middle" >0,5</text>
<line x1="1012" y1="202.25" x2="1017" y2="202.25" stroke="#8c8c8c" stroke-width="1.2" />
<text x="1011" y="208.05" font-size="14.2" fill="#dcdcdc" text-anchor="end" >0,5</text>
<line x1="1603.49" y1="612" x2="1603.49" y2="617.5" stroke="#8c8c8c" stroke-width="1.2" />
<text x="1602.69" y="633" font-size="14.2" fill="#dcdcdc" text-anchor="middle" >0,55</text>
<line x1="1012" y1="161.33" x2="1017" y2="161.33" stroke="#8c8c8c" stroke-width="1.2" />
<text x="1011" y="167.13" font-size="14.2" fill="#dcdcdc" text-anchor="end" >0,55</text>
<rect x="1017.5" y="119.5" width="640" height="492" fill="none" stroke="#8c8c8c" stroke-width="1.4"/>
<path d="M.5 1006V935Q.5 930 5.5 930H151Q156 930 156 935V1006Z" fill="url(#bb1)"/>
<rect x="7" y="936" width="142.5" height="45" rx="4" fill="#c0c0c0"/>
<rect x="7" y="936" width="142.5" height="45" rx="4" fill="none" stroke="#000" stroke-opacity=".25" stroke-width="1.2"/>
<text x="78.25" y="999.7" font-size="12.5" fill="#262626" text-anchor="middle" font-weight="bold" textLength="36.8" lengthAdjust="spacingAndGlyphs" >White</text>
<path d="M158.5 1006V935Q158.5 930 163.5 930H309Q314 930 314 935V1006Z" fill="url(#bb1)"/>
<rect x="165" y="936" width="142.5" height="45" rx="4" fill="#c00000"/>
<rect x="165" y="936" width="142.5" height="45" rx="4" fill="none" stroke="#000" stroke-opacity=".25" stroke-width="1.2"/>
<text x="236.25" y="999.7" font-size="12.5" fill="#262626" text-anchor="middle" font-weight="bold" textLength="22.7" lengthAdjust="spacingAndGlyphs" >Red</text>
<path d="M316.5 1006V935Q316.5 930 321.5 930H467Q472 930 472 935V1006Z" fill="url(#bb1)"/>
<rect x="323" y="936" width="142.5" height="45" rx="4" fill="#00c000"/>
<rect x="323" y="936" width="142.5" height="45" rx="4" fill="none" stroke="#000" stroke-opacity=".25" stroke-width="1.2"/>
<text x="394.25" y="999.7" font-size="12.5" fill="#262626" text-anchor="middle" font-weight="bold" textLength="37.8" lengthAdjust="spacingAndGlyphs" >Green</text>
<path d="M474.5 1006V935Q474.5 930 479.5 930H625Q630 930 630 935V1006Z" fill="url(#bb1)"/>
<rect x="481" y="936" width="142.5" height="45" rx="4" fill="#0000c0"/>
<rect x="481" y="936" width="142.5" height="45" rx="4" fill="none" stroke="#000" stroke-opacity=".25" stroke-width="1.2"/>
<text x="552.25" y="999.7" font-size="12.5" fill="#262626" text-anchor="middle" font-weight="bold" textLength="27.2" lengthAdjust="spacingAndGlyphs" >Blue</text>
<path d="M632.5 1006V935Q632.5 930 637.5 930H783Q788 930 788 935V1006Z" fill="url(#bb1)"/>
<rect x="639" y="936" width="142.5" height="45" rx="4" fill="#00c0c0"/>
<rect x="639" y="936" width="142.5" height="45" rx="4" fill="none" stroke="#000" stroke-opacity=".25" stroke-width="1.2"/>
<text x="710.25" y="999.7" font-size="12.5" fill="#262626" text-anchor="middle" font-weight="bold" textLength="29.2" lengthAdjust="spacingAndGlyphs" >Cyan</text>
<path d="M790.5 1006V935Q790.5 930 795.5 930H941Q946 930 946 935V1006Z" fill="url(#bb1)"/>
<rect x="797" y="936" width="142.5" height="45" rx="4" fill="#c000c0"/>
<rect x="797" y="936" width="142.5" height="45" rx="4" fill="none" stroke="#000" stroke-opacity=".25" stroke-width="1.2"/>
<text x="868.25" y="999.7" font-size="12.5" fill="#262626" text-anchor="middle" font-weight="bold" textLength="55.3" lengthAdjust="spacingAndGlyphs" >Magenta</text>
<path d="M948.5 1006V935Q948.5 930 953.5 930H1099Q1104 930 1104 935V1006Z" fill="url(#bb1)"/>
<rect x="955" y="936" width="142.5" height="45" rx="4" fill="#c0c000"/>
<rect x="955" y="936" width="142.5" height="45" rx="4" fill="none" stroke="#000" stroke-opacity=".25" stroke-width="1.2"/>
<text x="1026.25" y="999.7" font-size="12.5" fill="#262626" text-anchor="middle" font-weight="bold" textLength="41" lengthAdjust="spacingAndGlyphs" >Yellow</text>
<path d="M1106.5 1006V935Q1106.5 930 1111.5 930H1257Q1262 930 1262 935V1006Z" fill="#282828"/>
<rect x="1113" y="936" width="142.5" height="45" rx="4" fill="#ffffff"/>
<text x="1184.25" y="999.7" font-size="12.5" fill="#ffffff" text-anchor="middle" font-weight="bold" textLength="36.2" lengthAdjust="spacingAndGlyphs" >100W</text>
<path d="M1265 952V935Q1265 929.5 1270.5 929.5H1319.5Q1325 929.5 1325 935V952Z" fill="url(#cbt)"/>
<rect x="1265" y="952" width="60" height="1.3" fill="#454545" />
<rect x="1265" y="953.3" width="60" height="52" fill="url(#cb2)" />
<clipPath id="uc"><rect x="1265" y="929" width="60" height="23"/></clipPath>
<circle cx="1295.4" cy="941.4" r="9.8" fill="url(#ic)" clip-path="url(#uc)"/>
<path d="M1289.3 943.2l6.1-5.8 6.1 5.8z" fill="#333"/>
<rect x="1277" y="961.2" width="36.3" height="36.3" rx="6" fill="url(#si)" stroke="#282828" stroke-width="2.8"/>
<rect x="1287" y="971.3" width="16.8" height="16.8" fill="#000000" />
<rect x="1326" y="929.3" width="58" height="37.2" fill="url(#cb)" />
<rect x="1326" y="929.3" width="58" height="1" fill="#b8b8b8" />
<rect x="1385" y="929.3" width="55" height="37.2" fill="url(#cb)" />
<rect x="1385" y="929.3" width="55" height="1" fill="#b8b8b8" />
<rect x="1441" y="929.3" width="55" height="37.2" fill="url(#cb)" />
<rect x="1441" y="929.3" width="55" height="1" fill="#b8b8b8" />
<rect x="1498" y="929.3" width="55" height="37.2" fill="url(#cb)" />
<rect x="1498" y="929.3" width="55" height="1" fill="#b8b8b8" />
<rect x="1554" y="929.3" width="55.2" height="37.2" fill="url(#cb)" />
<rect x="1554" y="929.3" width="55.2" height="1" fill="#b8b8b8" />
<circle cx="1354.7" cy="948.3" r="12.2" fill="url(#ic)"/>
<circle cx="1412.3" cy="948.3" r="12.2" fill="url(#ic)"/>
<circle cx="1469" cy="948.3" r="12.2" fill="url(#ic)"/>
<circle cx="1525.4" cy="948.3" r="12.2" fill="url(#ic)"/>
<circle cx="1581.5" cy="948.3" r="12.2" fill="url(#ic)"/>
<rect x="1349.9" y="943.6" width="9.6" height="9.4" fill="#353535" />
<path d="M1408.7 942.8l10.8 5.8-10.8 5.8z" fill="#353535"/>
<text x="1469" y="952.3" font-size="12.5" fill="#353535" text-anchor="middle" font-weight="bold" textLength="15.6" lengthAdjust="spacingAndGlyphs" >[··]</text>
<text x="1525.4" y="954.2" font-size="19" fill="#353535" text-anchor="middle" font-weight="bold" textLength="17.8" lengthAdjust="spacingAndGlyphs" >∞</text>
<path d="M1575.7 947.2a6 6 0 0 1 10-3.6M1587.3 949.6a6 6 0 0 1-10 3.6" fill="none" stroke="#353535" stroke-width="2.5"/>
<path d="M1588.5 940.3v6h-6zM1574.5 956.5v-6h6z" fill="#353535"/>
<rect x="1326" y="968.2" width="170" height="38" fill="url(#bn)" />
<rect x="1498" y="968.2" width="171" height="38" fill="url(#bn)" />
<rect x="1326" y="968.2" width="170" height="1" fill="#c2c2c2" />
<rect x="1498" y="968.2" width="171" height="1" fill="#c2c2c2" />
<circle cx="1364.9" cy="987.3" r="12.3" fill="url(#ic)"/>
<circle cx="1632" cy="987.3" r="12.3" fill="url(#ic)"/>
<path d="M1364.3 981l-5 6.1 5 6.1M1369.7 981l-5 6.1 5 6.1" fill="none" stroke="#353535" stroke-width="1.7"/>
<path d="M1627 981l5 6.1-5 6.1M1632.6 981l5 6.1-5 6.1" fill="none" stroke="#353535" stroke-width="1.7"/>
<text x="1400" y="997.3" font-size="26" fill="#b8b8b8" textLength="61" lengthAdjust="spacingAndGlyphs" stroke="#b8b8b8" stroke-width=".6">Back</text>
<text x="1399.7" y="996.3" font-size="26" fill="#393939" textLength="61" lengthAdjust="spacingAndGlyphs" stroke="#393939" stroke-width=".9">Back</text>
<text x="1533.6" y="997.3" font-size="26" fill="#b8b8b8" textLength="63" lengthAdjust="spacingAndGlyphs" stroke="#b8b8b8" stroke-width=".6">Next</text>
<text x="1533.3" y="996.3" font-size="26" fill="#393939" textLength="63" lengthAdjust="spacingAndGlyphs" stroke="#393939" stroke-width=".9">Next</text>
<text x="1621.8" y="982.3" font-size="66" fill="#1c1c1c" font-weight="bold" font-family="DejaVu Sans,sans-serif" stroke-linejoin="round" stroke-width="2.5" stroke="#1c1c1c" opacity=".8">*</text>
<text x="1620.3" y="980.6" font-size="66" fill="#e60a0a" font-weight="bold" font-family="DejaVu Sans,sans-serif" stroke-linejoin="round" stroke-width="2.5" stroke="#e60a0a">*</text>
<rect x="1660" y="0" width="8" height="1005" fill="url(#es)" />
<rect x="0" y="39" width="1" height="890" fill="#2b2b2b" />
</svg>
<div class="cie" style="left:1018px;top:120px;width:639px;height:491px;clip-path:path('M265.63 474.38L267.63 475.47L269.1 475.87L270.62 475.97L272.13 475.79L273.57 475.31L274.9 474.57L276.06 473.59L650.04 89.29L651 88.1L651.7 86.74L652.14 85.28L652.28 83.75L652.13 82.23L651.68 80.77L650.97 79.42L650.01 78.23L648.18 76.85L646.78 76.25L645.28 75.93L204.07 25.29L144.55 18.71L108.44 15.13L87.47 13.49L68.38 12.55L50.24 12.39L38.38 12.85L29.79 13.8L25.03 14.79L22.11 15.68L18.07 17.38L15.96 18.55L13.34 20.4L11.5 22.05L8.74 25.33L7.28 27.61L5.71 30.79L4.68 33.56L3.85 36.55L3.3 39.27L2.81 42.88L2.53 46.75L2.47 50.91L2.66 55.77L3.08 60.58L4.69 71.48L7.35 84.15L11.15 98.5L16.37 115.21L22.95 133.79L30.91 154.17L40.08 175.85L45.21 187.28L50.58 198.68L56.36 210.4L62.55 222.35L75.48 245.9L89 269.19L102.64 291.82L116.2 313.3L122.94 323.54L135.84 342.31L148.21 359.3L159.95 374.53L170.87 387.88L175.98 393.84L185.06 403.92L193.09 412.19L204.03 422.65L210.79 428.75L220.02 436.71L247.35 459.34L258.44 468.73Z')"><i style="height:2px"></i><i style="height:2px"></i><i style="height:2px"></i><i style="height:2px"></i><i style="height:2px"></i><i style="height:2px"></i><i style="height:2px;background:linear-gradient(90deg,#0f0 30px,#0f0 91px)"></i><i style="height:2px;background:linear-gradient(90deg,#0f0 21px,#0f0 115px)"></i><i style="height:2px;background:linear-gradient(90deg,#0f0 17px,#03ff00 132px,#0aff00 135px)"></i><i style="height:2px;background:linear-gradient(90deg,#0f0 14px,#02ff00 132px,#39ff00 155px)"></i><i style="height:2px;background:linear-gradient(90deg,#00ff02 11px,#01ff00 132px,#6aff00 173px)"></i><i style="height:2px;background:linear-gradient(90deg,#00ff06 9px,#0f0 89px,#03ff00 133px,#6cff00 174px,#a0ff00 191px)"></i><i style="height:2px;background:linear-gradient(90deg,#00ff09 8px,#0f0 97px,#02ff00 133px,#6cff00 174px,#d9ff00 208px,#df0 209px)"></i><i style="height:2px;background:linear-gradient(90deg,#00ff0d 6px,#0f0 115px,#02ff00 133px,#69ff00 173px,#d6ff00 207px,#fffc00 219px,#ffe400 226px)"></i><i style="height:2px;background:linear-gradient(90deg,#00ff10 5px,#01ff00 133px,#69ff00 173px,#d6ff00 207px,#ff0 218px,#ffc600 236px,#ffb400 243px)"></i><i style="height:2px;background:linear-gradient(90deg,#00ff13 4px,#02ff00 134px,#6bff00 174px,#daff00 208px,#fffe00 218px,#ffc500 236px,#ff9000 261px)"></i><i style="height:2px;background:linear-gradient(90deg,#00ff17 4px,#02ff04 134px,#6bff00 174px,#dbff00 208px,#fffd00 218px,#ffc400 236px,#ff8f00 261px,#ff7600 278px)"></i><i style="height:2px;background:linear-gradient(90deg,#00ff1a 3px,#01ff08 134px,#6bff00 174px,#d8ff00 207px,#fffd00 218px,#ffc300 236px,#ff8f00 261px,#ff6000 296px)"></i><i style="height:2px;background:linear-gradient(90deg,#00ff1e 2px,#03ff0d 135px,#6bff05 174px,#d8ff00 207px,#fffc00 218px,#ffc300 236px,#ff8e00 261px,#ff5e00 297px,#ff4f00 313px)"></i><i style="height:2px;background:linear-gradient(90deg,#00ff21 2px,#02ff11 135px,#6aff0a 174px,#d9ff03 207px,#ff0 217px,#ffc400 235px,#ff8f00 260px,#ff6000 295px,#ff4100 331px)"></i><i style="height:2px;background:linear-gradient(90deg,#00ff24 2px,#01ff16 135px,#6aff0f 174px,#d9ff08 207px,#fffe06 217px,#ffc401 235px,#ff8e00 260px,#ff5f00 295px,#ff3500 348px)"></i><i style="height:2px;background:linear-gradient(90deg,#00ff28 2px,#03ff1a 136px,#6aff14 174px,#d9ff0e 207px,#fffe0c 217px,#ffc306 235px,#ff8d00 260px,#ff5e00 295px,#ff3400 348px,#ff2b00 365px)"></i><i style="height:2px;background:linear-gradient(90deg,#00ff2b 1px,#02ff1f 136px,#6aff1a 174px,#d6ff14 206px,#fffd12 217px,#ffc20a 235px,#ff8c04 260px,#ff5d00 295px,#ff3400 348px,#f20 383px)"></i><i style="height:2px;background:linear-gradient(90deg,#00ff2f 1px,#01ff24 136px,#69ff1f 174px,#d7ff1a 206px,#fffc17 217px,#ffc10f 235px,#ff8d08 259px,#ff5e01 294px,#ff3400 346px,#ff1b00 400px)"></i><i style="height:2px;background:linear-gradient(90deg,#00ff32 1px,#03ff28 137px,#6cff24 175px,#dbff1f 207px,#ffff1e 216px,#ffc314 234px,#ff8e0c 258px,#ff5f05 292px,#ff3600 343px,#ff1400 418px)"></i><i style="height:2px;background:linear-gradient(90deg,#00ff36 1px,#02ff2d 137px,#69ff2a 174px,#d8ff26 206px,#ffff24 216px,#ffc51a 233px,#ff8f10 257px,#ff6008 291px,#ff3600 342px,#ff1200 423px,#ff0e00 435px)"></i><i style="height:2px;background:linear-gradient(90deg,#00ff3a 1px,#01ff32 137px,#69ff2f 174px,#d8ff2c 206px,#fffe2a 216px,#ffc41f 233px,#ff8e14 257px,#ff5f0b 291px,#ff3503 342px,#f10 423px,#ff0900 453px)"></i><i style="height:2px;background:linear-gradient(90deg,#00ff3d 1px,#03ff37 138px,#6cff35 175px,#d9ff32 206px,#fffd30 216px,#ffc324 233px,#ff8e18 257px,#ff5e0e 291px,#ff3405 342px,#f10 423px,#ff0400 470px)"></i><i style="height:2px;background:linear-gradient(90deg,#00ff41 2px,#02ff3c 138px,#6bff3a 175px,#d9ff38 206px,#fffc37 216px,#ffc229 233px,#ff8d1c 257px,#ff5d11 291px,#ff3407 342px,#ff1000 423px,#f00 487px)"></i><i style="height:2px;background:linear-gradient(90deg,#00ff45 2px,#01ff41 138px,#6bff40 175px,#daff3e 206px,#feff3e 215px,#ffc22e 233px,#ff8e21 256px,#ff5f15 289px,#ff350a 339px,#ff1101 418px,#f00 497px,#f00 505px)"></i><i style="height:2px;background:linear-gradient(90deg,#00ff48 2px,#03ff46 139px,#6bff46 175px,#daff45 206px,#ff4 215px,#ffc434 232px,#ff8f26 255px,#ff5f18 288px,#ff360d 337px,#ff1203 415px,#f00 495px,#f00 522px)"></i><i style="height:2px;background:linear-gradient(90deg,#00ff4c 2px,#02ff4c 139px,#6bff4b 175px,#dbff4b 206px,#fffe4b 215px,#ffc339 232px,#ff8e2a 255px,#ff5e1c 288px,#ff350f 337px,#ff1105 415px,#f00 493px,#f00 540px)"></i><i style="height:2px;background:linear-gradient(90deg,#00ff50 2px,#01ff51 139px,#6aff51 175px,#d7ff52 205px,#fffd51 215px,#ffc23f 232px,#ff8d2e 255px,#ff5e1f 288px,#ff3412 337px,#ff1106 416px,#f00 492px,#f00 557px)"></i><i style="height:2px;background:linear-gradient(90deg,#00ff54 3px,#00ff56 139px,#6aff57 175px,#d8ff58 205px,#fffc58 215px,#ffc144 232px,#ff8c32 255px,#ff5d22 288px,#ff3414 337px,#ff1008 416px,#ff0002 490px,#f00 575px)"></i><i style="height:2px;background:linear-gradient(90deg,#00ff57 3px,#02ff5c 140px,#6aff5d 175px,#d8ff5f 205px,#feff60 214px,#ffc049 232px,#ff8b36 255px,#ff5c25 288px,#ff3317 337px,#ff100a 416px,#ff0003 488px,#f00 592px)"></i><i style="height:2px;background:linear-gradient(90deg,#00ff5b 3px,#01ff61 140px,#6aff64 175px,#d9ff66 205px,#ffff67 214px,#ffc551 230px,#ff903d 252px,#ff612b 283px,#ff371b 330px,#ff130d 404px,#ff0005 484px,#f00 609px)"></i><i style="height:2px;background:linear-gradient(90deg,#00ff5f 4px,#01ff67 140px,#69ff6a 175px,#d9ff6d 205px,#fffe6e 214px,#ffc456 230px,#ff8f41 252px,#ff602e 283px,#ff361d 330px,#ff120f 405px,#ff0006 483px,#f00 627px)"></i><i style="height:2px;background:linear-gradient(90deg,#00ff63 4px,#02ff6c 141px,#6cff70 176px,#daff74 205px,#fffd75 214px,#ffc35c 230px,#ff8e46 252px,#ff6032 283px,#ff3620 330px,#ff1211 405px,#ff0008 481px,#f00 639px)"></i><i style="height:2px;background:linear-gradient(90deg,#00ff67 5px,#02ff72 141px,#69ff77 175px,#d6ff7b 204px,#fffd7c 214px,#ffc262 230px,#ff8e4a 252px,#ff5f35 283px,#ff3522 330px,#ff1112 405px,#ff000a 479px,#f00 639px)"></i><i style="height:2px;background:linear-gradient(90deg,#00ff6b 5px,#01ff78 141px,#68ff7d 175px,#d6ff82 204px,#fffc83 214px,#ffc167 230px,#ff8d4f 252px,#ff5e39 283px,#ff3425 330px,#ff1114 405px,#ff000b 477px,#f00 639px)"></i><i style="height:2px;background:linear-gradient(90deg,#00ff6f 5px,#03ff7e 142px,#6cff84 176px,#dbff8a 205px,#ffff8c 213px,#ffc46f 229px,#ff9055 250px,#ff613e 280px,#ff3729 325px,#ff1317 397px,#ff000d 474px,#ff0001 639px)"></i><i style="height:2px;background:linear-gradient(90deg,#00ff73 6px,#02ff84 142px,#6bff8a 176px,#d8ff91 204px,#ffff93 213px,#ffc676 228px,#ff915b 249px,#ff6142 279px,#ff372c 324px,#ff131a 395px,#ff000f 472px,#ff0002 639px)"></i><i style="height:2px;background:linear-gradient(90deg,#00ff78 6px,#01ff8a 142px,#68ff91 175px,#d4ff98 203px,#fffe9b 213px,#ffc57c 228px,#ff905f 249px,#ff6046 279px,#ff362f 324px,#ff131c 395px,#ff0010 470px,#ff0003 639px)"></i><i style="height:2px;background:linear-gradient(90deg,#00ff7c 7px,#03ff90 143px,#6bff98 176px,#d9ffa0 204px,#fffda2 213px,#ffc482 228px,#ff8f64 249px,#ff6049 279px,#ff3632 324px,#ff121e 395px,#ff0012 468px,#ff0004 639px)"></i><i style="height:2px;background:linear-gradient(90deg,#00ff80 7px,#02ff96 143px,#6bff9f 176px,#d9ffa8 204px,#fffcaa 213px,#ffc388 228px,#ff8e69 249px,#ff5f4d 279px,#ff3534 324px,#ff111f 396px,#ff0014 467px,#ff0005 639px)"></i><i style="height:2px;background:linear-gradient(90deg,#00ff85 8px,#01ff9d 143px,#6affa6 176px,#daffb0 204px,#feffb4 212px,#ffc28e 228px,#ff8d6e 249px,#ff5e51 279px,#ff3437 324px,#ff1121 396px,#ff0015 465px,#ff0006 639px)"></i><i style="height:2px;background:linear-gradient(90deg,#00ff89 8px,#03ffa3 144px,#6affad 176px,#d6ffb8 203px,#ffffbc 212px,#ffc496 227px,#ff9075 247px,#ff6157 276px,#ff373c 319px,#ff1325 388px,#ff0017 462px,#ff0007 639px)"></i><i style="height:2px;background:linear-gradient(90deg,#00ff8d 9px,#02ffaa 144px,#6affb5 176px,#d6ffc0 203px,#fffec4 212px,#ffc39d 227px,#ff8f7a 247px,#ff605b 276px,#ff363f 319px,#ff1227 388px,#ff0019 460px,#ff0008 639px)"></i><i style="height:2px;background:linear-gradient(90deg,#00ff92 9px,#01ffb0 144px,#69ffbc 176px,#d7ffc8 203px,#fffdcc 212px,#ffc2a3 227px,#ff8e7f 247px,#ff5f5e 276px,#ff3642 319px,#ff1229 388px,#ff001b 458px,#ff0009 639px)"></i><i style="height:2px;background:linear-gradient(90deg,#00ff96 10px,#00ffb7 144px,#69ffc4 176px,#d7ffd1 203px,#fffcd3 212px,#ffc1a9 227px,#ff8d84 247px,#ff5e62 276px,#ff3545 319px,#ff112b 388px,#ff001d 456px,#ff000a 639px)"></i><i style="height:2px;background:linear-gradient(90deg,#00ff9b 11px,#00ffbd 141px,#05ffbe 146px,#6dffcc 177px,#ddffda 204px,#feffde 211px,#ffc0b0 227px,#ff8c89 247px,#ff5d66 276px,#ff3447 319px,#ff112d 388px,#ff001e 455px,#ff000b 639px)"></i><i style="height:2px;background:linear-gradient(90deg,#00ffa0 11px,#00ffc2 137px,#01ffc5 145px,#69ffd3 176px,#d4ffe1 202px,#ffffe7 211px,#ffc6bb 225px,#ff9091 245px,#ff606d 273px,#ff364d 315px,#ff1231 382px,#ff0021 452px,#ff000c 638px)"></i><i style="height:2px;background:linear-gradient(90deg,#00ffa4 12px,#00ffc8 135px,#03ffcc 146px,#6cffdb 177px,#d9ffeb 203px,#fffef0 211px,#ffc5c2 225px,#ff9198 244px,#ff6172 272px,#ff3751 313px,#ff1334 378px,#ff0023 449px,#ff000d 636px)"></i><i style="height:2px;background:linear-gradient(90deg,#00ffa9 13px,#00ffcd 132px,#02ffd3 146px,#6cffe3 177px,#dafff4 203px,#fffdf8 211px,#ffc4c9 225px,#ff909e 244px,#ff6076 272px,#ff3654 313px,#ff1236 379px,#ff0024 448px,#ff000e 634px)"></i><i style="height:2px;background:linear-gradient(90deg,#00ffae 13px,#00ffd3 129px,#01ffda 146px,#68ffeb 176px,#d6fffc 202px,#fff7fc 212px,#ffbfcd 226px,#ff8b9f 246px,#ff5c78 274px,#f35 316px,#ff1036 384px,#ff0026 447px,#ff000f 632px)"></i><i style="height:2px;background:linear-gradient(90deg,#00ffb3 14px,#00ffd8 127px,#03ffe2 147px,#6bfff4 177px,#c1fcff 198px,#ffedfd 214px,#ffb5cb 229px,#ff829d 250px,#ff5475 280px,#ff2c52 326px,#ff0933 401px,#ff0028 448px,#ff0010 630px)"></i><i style="height:2px;background:linear-gradient(90deg,#00ffb8 14px,#00ffde 125px,#02ffe9 147px,#6bfffc 177px,#fde6ff 215px,#ffa8c7 233px,#ff7698 256px,#ff4970 289px,#ff234d 340px,#ff022f 425px,#ff0015 591px,#f01 629px)"></i><i style="height:2px;background:linear-gradient(90deg,#00ffbd 15px,#00ffe4 123px,#01fff1 147px,#5efcff 174px,#ffdafd 218px,#ffa2c8 235px,#ff719a 258px,#ff4571 292px,#ff1f4d 345px,#ff002f 430px,#ff0015 598px,#ff0013 627px)"></i><i style="height:2px;background:linear-gradient(90deg,#00ffc2 16px,#00ffea 121px,#00fff9 147px,#3cfaff 165px,#fad4ff 218px,#ffc9f6 222px,#ff94c2 240px,#ff6493 266px,#ff3a6a 304px,#ff1546 364px,#ff002f 436px,#ff0015 607px,#ff0014 625px)"></i><i style="height:2px;background:linear-gradient(90deg,#00ffc7 16px,#00fff0 119px,#02fdff 148px,#bfd7ff 204px,#ffc8fd 222px,#ff93c8 240px,#ff6397 266px,#ff396d 304px,#ff1549 364px,#ff0032 434px,#ff0017 600px,#ff0015 623px)"></i><i style="height:2px;background:linear-gradient(90deg,#0fc 17px,#00fff6 118px,#00fbff 140px,#01f6ff 148px,#bdcfff 205px,#ffc0fd 224px,#ff8dc9 242px,#ff5f98 268px,#ff366e 307px,#ff1249 368px,#f03 433px,#ff0019 595px,#ff0016 621px)"></i><i style="height:2px;background:linear-gradient(90deg,#00ffd2 18px,#00fffc 116px,#00efff 148px,#bec7ff 207px,#ffb8fd 226px,#ff86c7 245px,#ff5997 272px,#ff316d 312px,#ff0f48 375px,#ff0035 432px,#ff001a 590px,#ff0017 619px)"></i><i style="height:2px;background:linear-gradient(90deg,#00ffd7 19px,#00fcff 114px,#02e7ff 149px,#c0bfff 209px,#ffb1fd 228px,#ff80c8 247px,#ff5598 274px,#ff2f6e 314px,#ff0e4a 377px,#ff0037 431px,#ff001c 586px,#ff0019 617px)"></i><i style="height:2px;background:linear-gradient(90deg,#00ffdc 19px,#00fcff 102px,#01e1ff 149px,#beb9ff 210px,#ffa9fd 230px,#ff79c7 250px,#ff4f97 278px,#ff2a6d 320px,#ff0a48 386px,#ff0039 431px,#ff001d 583px,#ff001a 615px)"></i><i style="height:2px;background:linear-gradient(90deg,#00ffe2 20px,#00fcff 91px,#00daff 149px,#bcb2ff 211px,#ffa2fd 232px,#ff75c8 252px,#ff4c99 280px,#ff286e 322px,#ff084a 388px,#ff003b 430px,#ff001f 579px,#ff001b 613px)"></i><i style="height:2px;background:linear-gradient(90deg,#00ffe8 21px,#00fcff 79px,#02d4ff 150px,#c0abff 214px,#ff9cfd 234px,#ff70c9 254px,#ff4899 283px,#ff246e 326px,#ff0649 394px,#ff003c 434px,#ff0020 584px,#ff001c 611px)"></i><i style="height:2px;background:linear-gradient(90deg,#00ffed 21px,#00fcff 67px,#01ceff 150px,#bea5ff 215px,#ff95fe 236px,#ff6ac8 257px,#ff4397 287px,#ff216d 331px,#ff0349 401px,#ff002a 521px,#ff001e 609px)"></i><i style="height:2px;background:linear-gradient(90deg,#00fff3 22px,#00fbff 56px,#00c8ff 150px,#bc9fff 216px,#ff8ffe 238px,#ff66c9 259px,#ff4099 289px,#ff1e6e 334px,#ff0149 405px,#ff002a 526px,#ff001f 607px)"></i><i style="height:2px;background:linear-gradient(90deg,#00fff9 23px,#00f9ff 48px,#02c2ff 151px,#c098ff 219px,#ff89fe 240px,#ff60c7 262px,#ff3b97 293px,#ff1b6d 339px,#ff0048 412px,#ff002a 537px,#ff0020 605px)"></i><i style="height:2px;background:linear-gradient(90deg,#0ff 24px,#01bdff 151px,#bf93ff 220px,#ff84fe 242px,#ff5cc8 264px,#ff3899 295px,#ff196e 341px,#ff004b 411px,#ff002c 534px,#f02 603px)"></i><i style="height:2px;background:linear-gradient(90deg,#00faff 24px,#03b8ff 152px,#c08dff 222px,#ff7efe 244px,#ff58c9 266px,#ff3599 298px,#ff166e 345px,#ff004d 411px,#ff002d 532px,#ff0023 601px)"></i><i style="height:2px;background:linear-gradient(90deg,#00f4ff 25px,#02b3ff 152px,#be88ff 223px,#ff79fe 246px,#ff53c8 269px,#ff3197 302px,#ff136d 351px,#ff004f 411px,#ff002f 530px,#ff0024 599px)"></i><i style="height:2px;background:linear-gradient(90deg,#0ef 26px,#01afff 152px,#bf83ff 225px,#ff74fe 248px,#ff4fc9 271px,#ff2e99 304px,#ff116e 353px,#ff0051 409px,#ff0031 525px,#ff0026 597px)"></i><i style="height:2px;background:linear-gradient(90deg,#00e9ff 27px,#03aaff 153px,#c07eff 227px,#ff6ffe 250px,#ff4bc8 274px,#ff2a97 308px,#ff0e6d 358px,#ff0054 408px,#f03 522px,#ff0027 595px)"></i><i style="height:2px;background:linear-gradient(90deg,#00e3ff 28px,#02a5ff 153px,#be7aff 228px,#ff6afe 252px,#ff47c9 276px,#ff2899 310px,#ff0c6e 361px,#ff0056 407px,#ff0035 518px,#ff0028 593px)"></i><i style="height:2px;background:linear-gradient(90deg,#00dfff 28px,#01a1ff 153px,#c075ff 230px,#ff65fe 254px,#ff43c7 279px,#ff2497 314px,#ff0a6d 366px,#ff0058 406px,#ff0037 515px,#ff002a 592px)"></i><i style="height:2px;background:linear-gradient(90deg,#00daff 29px,#039dff 154px,#c070ff 232px,#ff61fe 256px,#ff40c8 281px,#f29 316px,#ff086e 368px,#ff005b 405px,#ff0039 512px,#ff002b 590px)"></i><i style="height:2px;background:linear-gradient(90deg,#00d5ff 30px,#0299ff 154px,#bf6cff 233px,#ff5dfe 258px,#ff3dc9 283px,#ff1f99 319px,#ff066e 372px,#ff005c 407px,#ff003a 514px,#ff002c 588px)"></i><i style="height:2px;background:linear-gradient(90deg,#00d0ff 31px,#0195ff 154px,#bd68ff 234px,#ff58fe 260px,#ff39c8 286px,#ff1c98 323px,#ff036d 378px,#ff0048 465px,#ff002e 586px)"></i><i style="height:2px;background:linear-gradient(90deg,#0cf 32px,#0391ff 155px,#c164ff 237px,#ff54fe 262px,#ff36c9 288px,#ff1a99 325px,#ff026e 380px,#ff0049 467px,#ff002f 584px)"></i><i style="height:2px;background:linear-gradient(90deg,#00c8ff 32px,#028eff 155px,#bf60ff 238px,#ff4ffc 265px,#ff31c6 292px,#ff1797 330px,#ff006c 387px,#ff0048 477px,#ff0031 582px)"></i><i style="height:2px;background:linear-gradient(90deg,#00c3ff 33px,#018aff 155px,#be5dff 239px,#ff4bfc 267px,#ff2ec7 294px,#ff1497 333px,#ff006d 390px,#ff0048 481px,#ff0032 580px)"></i><i style="height:2px;background:linear-gradient(90deg,#00bfff 34px,#0386ff 156px,#c158ff 242px,#ff48fc 269px,#ff2bc6 297px,#ff1196 337px,#ff0070 389px,#ff004b 478px,#ff0034 578px)"></i><i style="height:2px;background:linear-gradient(90deg,#0bf 35px,#0283ff 156px,#c055ff 243px,#ff44fc 271px,#ff28c7 299px,#ff1097 339px,#ff0073 387px,#ff004d 474px,#ff0035 576px)"></i><i style="height:2px;background:linear-gradient(90deg,#00b7ff 36px,#0180ff 156px,#be52ff 244px,#ff41fc 273px,#ff25c6 302px,#ff0d96 343px,#ff0076 386px,#ff0050 471px,#ff0037 574px)"></i><i style="height:2px;background:linear-gradient(90deg,#00b3ff 37px,#037dff 157px,#bf4eff 246px,#ff3dfc 275px,#ff23c7 304px,#ff0b97 345px,#ff0079 384px,#ff0053 467px,#ff0038 572px)"></i><i style="height:2px;background:linear-gradient(90deg,#00afff 38px,#027aff 157px,#c04bff 248px,#ff3afc 277px,#ff21c7 306px,#ff0997 348px,#ff007b 384px,#f05 466px,#ff003a 570px)"></i><i style="height:2px;background:linear-gradient(90deg,#00acff 38px,#0177ff 157px,#bf48ff 249px,#ff37fc 279px,#ff1ec6 309px,#ff0797 351px,#ff007e 384px,#ff0057 465px,#ff003c 568px)"></i><i style="height:2px;background:linear-gradient(90deg,#00a8ff 39px,#0374ff 158px,#bf45ff 251px,#ff34fc 281px,#ff1bc7 311px,#ff0597 354px,#ff007e 387px,#ff0057 469px,#ff003d 566px)"></i><i style="height:2px;background:linear-gradient(90deg,#00a5ff 40px,#0271ff 158px,#c042ff 253px,#ff31fc 283px,#ff19c6 314px,#ff0396 358px,#ff006c 423px,#ff0048 526px,#ff003f 564px)"></i><i style="height:2px;background:linear-gradient(90deg,#00a1ff 41px,#016fff 158px,#bf3fff 254px,#ff2efd 285px,#ff16c7 316px,#ff0297 360px,#ff006c 426px,#ff0048 530px,#ff0040 562px)"></i><i style="height:2px;background:linear-gradient(90deg,#009eff 42px,#036cff 159px,#c03cff 256px,#ff2bfd 287px,#ff14c7 318px,#ff0097 363px,#ff006d 429px,#ff0048 534px,#ff0042 560px)"></i><i style="height:2px;background:linear-gradient(90deg,#009aff 43px,#0269ff 159px,#be39ff 257px,#ff28fd 289px,#ff12c7 321px,#ff0097 366px,#ff006d 433px,#ff0048 539px,#f04 558px)"></i><i style="height:2px;background:linear-gradient(90deg,#0097ff 44px,#0167ff 159px,#bf37ff 259px,#ff25fd 291px,#ff10c7 323px,#f09 366px,#ff006f 433px,#ff004a 538px,#ff0045 557px)"></i><i style="height:2px;background:linear-gradient(90deg,#0094ff 45px,#0264ff 160px,#c034ff 261px,#ff23fd 293px,#ff0dc7 326px,#ff009d 365px,#ff0072 430px,#ff004d 532px,#ff0047 555px)"></i><i style="height:2px;background:linear-gradient(90deg,#0091ff 46px,#0262ff 160px,#bf32ff 262px,#ff20fd 295px,#ff0cc7 328px,#ff00a0 364px,#ff0075 428px,#ff004f 528px,#ff0049 553px)"></i><i style="height:2px;background:linear-gradient(90deg,#008eff 47px,#035fff 161px,#c12eff 265px,#ff1efd 297px,#ff09c6 331px,#ff00a4 363px,#ff0078 426px,#ff0052 524px,#ff004b 551px)"></i><i style="height:2px;background:linear-gradient(90deg,#008bff 48px,#025dff 161px,#c02cff 266px,#ff1bfd 299px,#ff08c7 333px,#ff00a7 362px,#ff007b 424px,#ff0054 520px,#ff004c 549px)"></i><i style="height:2px;background:linear-gradient(90deg,#0089ff 48px,#025bff 161px,#bf2aff 267px,#ff19fd 301px,#ff06c8 335px,#ff00a8 364px,#ff007c 426px,#f05 522px,#ff004e 547px)"></i><i style="height:2px;background:linear-gradient(90deg,#0086ff 49px,#0358ff 162px,#c028ff 269px,#ff17fd 303px,#ff04c7 338px,#ff0097 387px,#ff006d 460px,#ff0050 545px)"></i><i style="height:2px;background:linear-gradient(90deg,#0083ff 50px,#0256ff 162px,#c125ff 271px,#ff14fd 305px,#ff02c7 340px,#ff0097 390px,#ff006d 464px,#ff0052 543px)"></i><i style="height:2px;background:linear-gradient(90deg,#0080ff 51px,#0254ff 162px,#bf23ff 272px,#ff12fd 307px,#ff00c7 343px,#ff0096 394px,#ff006c 470px,#ff0054 541px)"></i><i style="height:2px;background:linear-gradient(90deg,#007eff 52px,#0352ff 163px,#c021ff 274px,#ff10fd 309px,#ff00c7 345px,#ff0097 396px,#ff006d 472px,#ff0056 539px)"></i><i style="height:2px;background:linear-gradient(90deg,#007bff 53px,#0250ff 163px,#c11fff 276px,#ff0efd 311px,#ff00c9 346px,#f09 397px,#ff006e 473px,#ff0057 537px)"></i><i style="height:2px;background:linear-gradient(90deg,#0079ff 54px,#024eff 163px,#c01dff 277px,#ff0cfd 313px,#ff00cd 345px,#ff009c 395px,#ff0071 469px,#ff0059 535px)"></i><i style="height:2px;background:linear-gradient(90deg,#0076ff 55px,#034cff 164px,#c01bff 279px,#ff0afd 315px,#ff00d1 344px,#ff00a0 393px,#ff0075 465px,#ff005b 533px)"></i><i style="height:2px;background:linear-gradient(90deg,#0074ff 56px,#024bff 164px,#bf19ff 280px,#ff08fd 317px,#ff00d6 343px,#ff00a4 391px,#ff0078 462px,#ff005d 531px)"></i><i style="height:2px;background:linear-gradient(90deg,#0071ff 57px,#0249ff 164px,#c017ff 282px,#ff06fd 319px,#ff00d7 344px,#ff00a6 392px,#ff0079 463px,#ff005f 529px)"></i><i style="height:2px;background:linear-gradient(90deg,#006fff 58px,#0347ff 165px,#c115ff 284px,#ff04fd 321px,#ff00c8 359px,#ff0098 413px,#ff006d 494px,#ff0061 527px)"></i><i style="height:2px;background:linear-gradient(90deg,#006dff 59px,#0245ff 165px,#bf13ff 285px,#ff02fd 323px,#ff00c7 362px,#ff0097 417px,#ff006d 499px,#ff0063 525px)"></i><i style="height:2px;background:linear-gradient(90deg,#006aff 61px,#0244ff 165px,#c011ff 287px,#ff00fd 325px,#ff00c8 364px,#ff0097 420px,#ff006d 503px,#f06 523px)"></i><i style="height:2px;background:linear-gradient(90deg,#0068ff 62px,#0342ff 166px,#c10fff 289px,#ff00fe 327px,#ff00c7 367px,#ff0097 423px,#ff006d 507px,#ff0068 521px)"></i><i style="height:2px;background:linear-gradient(90deg,#06f 63px,#0240ff 166px,#c00eff 290px,#ff00fc 330px,#ff00c7 370px,#ff0097 427px,#ff006c 512px,#ff0069 520px)"></i><i style="height:2px;background:linear-gradient(90deg,#0064ff 64px,#023fff 166px,#bf0cff 291px,#fb00ff 328px,#ff00e7 346px,#ff00b3 393px,#ff0085 460px,#ff006c 518px)"></i><i style="height:2px;background:linear-gradient(90deg,#0062ff 65px,#033dff 167px,#c10aff 294px,#f600ff 327px,#ff00fa 335px,#ff00c4 377px,#ff0095 436px,#ff006e 516px)"></i><i style="height:2px;background:linear-gradient(90deg,#0060ff 66px,#023cff 167px,#c009ff 295px,#f200ff 326px,#ff00fc 336px,#ff00c6 378px,#ff0096 437px,#ff0070 514px)"></i><i style="height:2px;background:linear-gradient(90deg,#005eff 67px,#023aff 167px,#bf07ff 296px,#ed00ff 325px,#ff00fc 338px,#ff00c6 380px,#ff0096 440px,#ff0072 512px)"></i><i style="height:2px;background:linear-gradient(90deg,#005cff 68px,#0338ff 168px,#c105ff 299px,#f000ff 329px,#ff00fc 340px,#ff00c6 383px,#ff0095 444px,#ff0075 510px)"></i><i style="height:2px;background:linear-gradient(90deg,#005aff 69px,#0237ff 168px,#c004ff 300px,#ff00fe 341px,#ff00c7 384px,#ff0097 445px,#f07 508px)"></i><i style="height:2px;background:linear-gradient(90deg,#0058ff 70px,#0336ff 169px,#c102ff 302px,#ff00fc 344px,#ff00c7 387px,#ff0097 448px,#ff0079 506px)"></i><i style="height:2px;background:linear-gradient(90deg,#0056ff 71px,#0334ff 169px,#c001ff 303px,#ff00fc 346px,#ff00c6 390px,#ff0096 452px,#ff007c 504px)"></i><i style="height:2px;background:linear-gradient(90deg,#0054ff 73px,#0233ff 169px,#c000ff 305px,#ff00fc 348px,#ff00c7 392px,#ff0096 455px,#ff007e 502px)"></i><i style="height:2px;background:linear-gradient(90deg,#0052ff 74px,#0331ff 170px,#c100ff 307px,#ff00fc 350px,#ff00c6 395px,#ff0096 459px,#ff0080 500px)"></i><i style="height:2px;background:linear-gradient(90deg,#0050ff 75px,#0330ff 170px,#c000ff 308px,#ff00fc 352px,#ff00c6 397px,#ff0096 461px,#ff0083 498px)"></i><i style="height:2px;background:linear-gradient(90deg,#004eff 76px,#022fff 170px,#b0f 306px,#ff00fc 354px,#ff00c7 399px,#ff0097 463px,#ff0085 496px)"></i><i style="height:2px;background:linear-gradient(90deg,#004dff 77px,#032eff 171px,#b600ff 304px,#ff00fc 356px,#ff00c6 402px,#ff0096 467px,#f08 494px)"></i><i style="height:2px;background:linear-gradient(90deg,#004bff 78px,#032cff 171px,#b100ff 302px,#ff00fd 358px,#ff00c7 404px,#ff0096 470px,#ff008b 492px)"></i><i style="height:2px;background:linear-gradient(90deg,#0049ff 79px,#022bff 171px,#ac00ff 300px,#ff00fd 360px,#ff00c6 407px,#ff0096 473px,#ff008d 490px)"></i><i style="height:2px;background:linear-gradient(90deg,#0047ff 81px,#032aff 172px,#a800ff 299px,#ff00fd 362px,#ff00c7 409px,#ff0096 476px,#ff0090 488px)"></i><i style="height:2px;background:linear-gradient(90deg,#0046ff 82px,#0229ff 172px,#a400ff 297px,#ff00fd 364px,#ff00c7 411px,#ff0097 478px,#ff0093 486px)"></i><i style="height:2px;background:linear-gradient(90deg,#04f 83px,#0228ff 172px,#9f00ff 295px,#ff00fd 366px,#ff00c7 414px,#ff0096 482px,#ff0095 484px)"></i><i style="height:2px;background:linear-gradient(90deg,#0043ff 84px,#0326ff 173px,#9a00ff 293px,#ff00fd 368px,#ff00c7 416px,#ff0098 483px)"></i><i style="height:2px;background:linear-gradient(90deg,#0041ff 85px,#0225ff 173px,#9600ff 291px,#ff00fd 370px,#ff00c6 419px,#ff009a 481px)"></i><i style="height:2px;background:linear-gradient(90deg,#0040ff 86px,#0224ff 173px,#9200ff 289px,#ff00fd 372px,#ff00c7 421px,#ff009d 479px)"></i><i style="height:2px;background:linear-gradient(90deg,#003eff 88px,#0323ff 174px,#8d00ff 287px,#ff00fd 374px,#ff00c7 423px,#ff00a0 477px)"></i><i style="height:2px;background:linear-gradient(90deg,#003dff 89px,#0222ff 174px,#8a00ff 286px,#ff00fd 376px,#ff00c7 426px,#ff00a3 475px)"></i><i style="height:2px;background:linear-gradient(90deg,#003bff 90px,#0221ff 174px,#8600ff 284px,#ff00fd 378px,#ff00c7 428px,#ff00a6 473px)"></i><i style="height:2px;background:linear-gradient(90deg,#003aff 91px,#0320ff 175px,#8200ff 282px,#ff00fd 380px,#ff00c7 431px,#ff00a9 471px)"></i><i style="height:2px;background:linear-gradient(90deg,#0038ff 92px,#021fff 175px,#7e00ff 280px,#ff00fd 382px,#ff00c7 433px,#ff00ac 469px)"></i><i style="height:2px;background:linear-gradient(90deg,#0037ff 94px,#021eff 175px,#7a00ff 278px,#ff00fd 384px,#ff00c7 436px,#ff00af 467px)"></i><i style="height:2px;background:linear-gradient(90deg,#0035ff 95px,#031dff 176px,#70f 276px,#ff00fd 386px,#ff00c7 438px,#ff00b2 465px)"></i><i style="height:2px;background:linear-gradient(90deg,#0034ff 96px,#021cff 176px,#7400ff 275px,#ff00fd 388px,#ff00c7 440px,#ff00b6 463px)"></i><i style="height:2px;background:linear-gradient(90deg,#03f 97px,#031bff 177px,#7000ff 273px,#ff00fd 390px,#ff00c7 443px,#ff00b9 461px)"></i><i style="height:2px;background:linear-gradient(90deg,#0032ff 98px,#031aff 177px,#6d00ff 271px,#ff00fd 392px,#ff00c7 445px,#ff00bc 459px)"></i><i style="height:2px;background:linear-gradient(90deg,#0030ff 100px,#0219ff 177px,#6900ff 269px,#ff00fd 394px,#ff00c7 448px,#ff00c0 457px)"></i><i style="height:2px;background:linear-gradient(90deg,#002fff 101px,#0318ff 178px,#60f 267px,#ff00fc 397px,#ff00c6 451px,#ff00c3 455px)"></i><i style="height:2px;background:linear-gradient(90deg,#002eff 102px,#0317ff 178px,#6200ff 265px,#ff00fc 399px,#ff00c7 453px)"></i><i style="height:2px;background:linear-gradient(90deg,#002cff 103px,#0217ff 178px,#6000ff 264px,#ff00fc 401px,#ff00ca 451px)"></i><i style="height:2px;background:linear-gradient(90deg,#002bff 105px,#0316ff 179px,#5d00ff 262px,#ff00fc 403px,#ff00ce 449px)"></i><i style="height:2px;background:linear-gradient(90deg,#002aff 106px,#0315ff 179px,#5900ff 260px,#ff00fc 405px,#ff00d1 448px)"></i><i style="height:2px;background:linear-gradient(90deg,#0029ff 107px,#0214ff 179px,#5600ff 258px,#ff00fc 407px,#ff00d4 446px)"></i><i style="height:2px;background:linear-gradient(90deg,#0027ff 108px,#0313ff 180px,#5400ff 257px,#ff00fc 409px,#ff00d8 444px)"></i><i style="height:2px;background:linear-gradient(90deg,#0026ff 110px,#0312ff 180px,#5100ff 255px,#ff00fc 411px,#ff00dc 442px)"></i><i style="height:2px;background:linear-gradient(90deg,#0025ff 111px,#0212ff 180px,#4e00ff 253px,#ff00fc 413px,#ff00e0 440px)"></i><i style="height:2px;background:linear-gradient(90deg,#0024ff 112px,#0311ff 181px,#4b00ff 251px,#ff00fc 415px,#ff00e4 438px)"></i><i style="height:2px;background:linear-gradient(90deg,#0023ff 113px,#0310ff 181px,#4800ff 249px,#ff00fc 417px,#ff00e8 436px)"></i><i style="height:2px;background:linear-gradient(90deg,#0021ff 115px,#020fff 181px,#4600ff 248px,#ff00fc 419px,#ff00ec 434px)"></i><i style="height:2px;background:linear-gradient(90deg,#0020ff 116px,#030eff 182px,#4300ff 246px,#ff00fc 421px,#ff00f0 432px)"></i><i style="height:2px;background:linear-gradient(90deg,#001fff 117px,#030eff 182px,#4000ff 244px,#ff00fc 423px,#ff00f5 430px)"></i><i style="height:2px;background:linear-gradient(90deg,#001eff 119px,#020dff 182px,#3e00ff 243px,#ff00fc 425px,#ff00f9 428px)"></i><i style="height:2px;background:linear-gradient(90deg,#001dff 120px,#030cff 183px,#3c00ff 241px,#fc00ff 422px,#ff00fe 426px)"></i><i style="height:2px;background:linear-gradient(90deg,#001cff 121px,#030cff 183px,#3900ff 239px,#f900ff 421px,#fc00ff 424px)"></i><i style="height:2px;background:linear-gradient(90deg,#001bff 123px,#030bff 184px,#3700ff 238px,#f600ff 421px,#f700ff 422px)"></i><i style="height:2px;background:linear-gradient(90deg,#001aff 124px,#030aff 184px,#3600ff 237px,#f300ff 420px)"></i><i style="height:2px;background:linear-gradient(90deg,#0019ff 125px,#0309ff 184px,#30f 235px,#ef00ff 418px)"></i><i style="height:2px;background:linear-gradient(90deg,#0018ff 127px,#0309ff 185px,#3100ff 234px,#eb00ff 416px)"></i><i style="height:2px;background:linear-gradient(90deg,#0017ff 128px,#0308ff 185px,#3000ff 233px,#e600ff 414px)"></i><i style="height:2px;background:linear-gradient(90deg,#0016ff 129px,#0207ff 185px,#2e00ff 232px,#e200ff 412px)"></i><i style="height:2px;background:linear-gradient(90deg,#0015ff 131px,#0307ff 186px,#2e00ff 232px,#df00ff 411px)"></i><i style="height:2px;background:linear-gradient(90deg,#0014ff 132px,#0306ff 186px,#2d00ff 232px,#db00ff 409px)"></i><i style="height:2px;background:linear-gradient(90deg,#0013ff 134px,#0206ff 186px,#2d00ff 233px,#d700ff 407px)"></i><i style="height:2px;background:linear-gradient(90deg,#0012ff 135px,#0305ff 187px,#3100ff 238px,#d300ff 405px)"></i><i style="height:2px;background:linear-gradient(90deg,#01f 136px,#0304ff 187px,#3700ff 245px,#d000ff 403px)"></i><i style="height:2px;background:linear-gradient(90deg,#0010ff 138px,#0204ff 187px,#4900ff 265px,#c0f 401px)"></i><i style="height:2px;background:linear-gradient(90deg,#000fff 139px,#0303ff 188px,#c100ff 392px,#c800ff 399px)"></i><i style="height:2px;background:linear-gradient(90deg,#000eff 141px,#0302ff 188px,#c100ff 393px,#c500ff 397px)"></i><i style="height:2px;background:linear-gradient(90deg,#000dff 142px,#0202ff 188px,#c000ff 394px,#c100ff 395px)"></i><i style="height:2px;background:linear-gradient(90deg,#000cff 144px,#0301ff 189px,#bd00ff 393px)"></i><i style="height:2px;background:linear-gradient(90deg,#000bff 145px,#0301ff 189px,#ba00ff 391px)"></i><i style="height:2px;background:linear-gradient(90deg,#000aff 147px,#0300ff 190px,#b700ff 389px)"></i><i style="height:2px;background:linear-gradient(90deg,#000aff 148px,#0300ff 190px,#b300ff 387px)"></i><i style="height:2px;background:linear-gradient(90deg,#0009ff 150px,#0300ff 190px,#b000ff 385px)"></i><i style="height:2px;background:linear-gradient(90deg,#0008ff 151px,#0300ff 191px,#ad00ff 383px)"></i><i style="height:2px;background:linear-gradient(90deg,#0007ff 153px,#0300ff 191px,#a900ff 381px)"></i><i style="height:2px;background:linear-gradient(90deg,#0006ff 154px,#0300ff 191px,#a600ff 379px)"></i><i style="height:2px;background:linear-gradient(90deg,#0005ff 156px,#0300ff 192px,#a300ff 377px)"></i><i style="height:2px;background:linear-gradient(90deg,#0004ff 157px,#0300ff 192px,#a000ff 375px)"></i><i style="height:2px;background:linear-gradient(90deg,#0003ff 159px,#0300ff 193px,#9e00ff 374px)"></i><i style="height:2px;background:linear-gradient(90deg,#0003ff 161px,#0300ff 193px,#9b00ff 372px)"></i><i style="height:2px;background:linear-gradient(90deg,#0002ff 162px,#0300ff 193px,#9800ff 370px)"></i><i style="height:2px;background:linear-gradient(90deg,#0001ff 164px,#0300ff 194px,#9500ff 368px)"></i><i style="height:2px;background:linear-gradient(90deg,#00f 165px,#0300ff 194px,#9200ff 366px)"></i><i style="height:2px;background:linear-gradient(90deg,#00f 167px,#0400ff 195px,#8f00ff 364px)"></i><i style="height:2px;background:linear-gradient(90deg,#00f 169px,#0300ff 195px,#8c00ff 362px)"></i><i style="height:2px;background:linear-gradient(90deg,#00f 170px,#0300ff 195px,#8900ff 360px)"></i><i style="height:2px;background:linear-gradient(90deg,#00f 172px,#0400ff 196px,#8700ff 358px)"></i><i style="height:2px;background:linear-gradient(90deg,#00f 174px,#0300ff 196px,#8400ff 356px)"></i><i style="height:2px;background:linear-gradient(90deg,#00f 176px,#0400ff 197px,#8100ff 354px)"></i><i style="height:2px;background:linear-gradient(90deg,#00f 177px,#0400ff 197px,#7e00ff 352px)"></i><i style="height:2px;background:linear-gradient(90deg,#00f 179px,#0400ff 198px,#7c00ff 350px)"></i><i style="height:2px;background:linear-gradient(90deg,#00f 181px,#0400ff 198px,#7900ff 348px)"></i><i style="height:2px;background:linear-gradient(90deg,#00f 183px,#0500ff 200px,#70f 346px)"></i><i style="height:2px;background:linear-gradient(90deg,#00f 185px,#0500ff 201px,#7400ff 344px)"></i><i style="height:2px;background:linear-gradient(90deg,#00f 187px,#0700ff 203px,#7200ff 342px)"></i><i style="height:2px;background:linear-gradient(90deg,#00f 188px,#0900ff 207px,#6f00ff 340px)"></i><i style="height:2px;background:linear-gradient(90deg,#00f 190px,#1c00ff 232px,#6e00ff 339px)"></i><i style="height:2px;background:linear-gradient(90deg,#00f 192px,#6b00ff 337px)"></i><i style="height:2px;background:linear-gradient(90deg,#00f 194px,#6900ff 335px)"></i><i style="height:2px;background:linear-gradient(90deg,#0100ff 197px,#60f 333px)"></i><i style="height:2px;background:linear-gradient(90deg,#0200ff 199px,#6400ff 331px)"></i><i style="height:2px;background:linear-gradient(90deg,#0300ff 201px,#6200ff 329px)"></i><i style="height:2px;background:linear-gradient(90deg,#0500ff 203px,#5f00ff 327px)"></i><i style="height:2px;background:linear-gradient(90deg,#0600ff 205px,#5d00ff 325px)"></i><i style="height:2px;background:linear-gradient(90deg,#0700ff 207px,#5b00ff 323px)"></i><i style="height:2px;background:linear-gradient(90deg,#0800ff 209px,#5900ff 321px)"></i><i style="height:2px;background:linear-gradient(90deg,#0a00ff 212px,#5700ff 319px)"></i><i style="height:2px;background:linear-gradient(90deg,#0b00ff 214px,#50f 317px)"></i><i style="height:2px;background:linear-gradient(90deg,#0c00ff 216px,#5200ff 315px)"></i><i style="height:2px;background:linear-gradient(90deg,#0e00ff 219px,#5000ff 313px)"></i><i style="height:2px;background:linear-gradient(90deg,#0f00ff 221px,#4e00ff 311px)"></i><i style="height:2px;background:linear-gradient(90deg,#10f 224px,#4c00ff 309px)"></i><i style="height:2px;background:linear-gradient(90deg,#1200ff 226px,#4a00ff 307px)"></i><i style="height:2px;background:linear-gradient(90deg,#1300ff 228px,#4800ff 305px)"></i><i style="height:2px;background:linear-gradient(90deg,#1500ff 231px,#4600ff 303px)"></i><i style="height:2px;background:linear-gradient(90deg,#1600ff 233px,#4500ff 302px)"></i><i style="height:2px;background:linear-gradient(90deg,#1700ff 236px,#4300ff 300px)"></i><i style="height:2px;background:linear-gradient(90deg,#1800ff 238px,#4100ff 298px)"></i><i style="height:2px;background:linear-gradient(90deg,#1900ff 240px,#3f00ff 296px)"></i><i style="height:2px;background:linear-gradient(90deg,#1b00ff 243px,#3d00ff 294px)"></i><i style="height:2px;background:linear-gradient(90deg,#1c00ff 245px,#3b00ff 292px)"></i><i style="height:2px;background:linear-gradient(90deg,#1e00ff 248px,#3a00ff 290px)"></i><i style="height:2px;background:linear-gradient(90deg,#1f00ff 250px,#3800ff 288px)"></i><i style="height:2px;background:linear-gradient(90deg,#1f00ff 252px,#3600ff 286px)"></i><i style="height:2px;background:linear-gradient(90deg,#2100ff 255px,#3400ff 284px)"></i><i style="height:2px;background:linear-gradient(90deg,#20f 257px,#3200ff 282px)"></i><i style="height:2px;background:linear-gradient(90deg,#2400ff 260px,#3100ff 280px)"></i><i style="height:2px;background:linear-gradient(90deg,#2400ff 262px,#2f00ff 278px)"></i><i style="height:2px;background:linear-gradient(90deg,#2600ff 265px,#2d00ff 276px)"></i><i style="height:2px"></i><i style="height:2px"></i><i style="height:2px"></i><i style="height:2px"></i><i style="height:2px"></i><i style="height:2px"></i><i style="height:2px"></i><i style="height:2px"></i><div style="position:absolute;left:0;top:0;width:639px;height:491px;background:rgba(0,0,0,0.38);clip-path:path(evenodd,'M265.63 474.38L267.63 475.47L269.1 475.87L270.62 475.97L272.13 475.79L273.57 475.31L274.9 474.57L276.06 473.59L650.04 89.29L651 88.1L651.7 86.74L652.14 85.28L652.28 83.75L652.13 82.23L651.68 80.77L650.97 79.42L650.01 78.23L648.18 76.85L646.78 76.25L645.28 75.93L204.07 25.29L144.55 18.71L108.44 15.13L87.47 13.49L68.38 12.55L50.24 12.39L38.38 12.85L29.79 13.8L25.03 14.79L22.11 15.68L18.07 17.38L15.96 18.55L13.34 20.4L11.5 22.05L8.74 25.33L7.28 27.61L5.71 30.79L4.68 33.56L3.85 36.55L3.3 39.27L2.81 42.88L2.53 46.75L2.47 50.91L2.66 55.77L3.08 60.58L4.69 71.48L7.35 84.15L11.15 98.5L16.37 115.21L22.95 133.79L30.91 154.17L40.08 175.85L45.21 187.28L50.58 198.68L56.36 210.4L62.55 222.35L75.48 245.9L89 269.19L102.64 291.82L116.2 313.3L122.94 323.54L135.84 342.31L148.21 359.3L159.95 374.53L170.87 387.88L175.98 393.84L185.06 403.92L193.09 412.19L204.03 422.65L210.79 428.75L220.02 436.71L247.35 459.34L258.44 468.73ZM479.76 63.51L132.99 31.11L186.65 362.19Z')"></div></div><div class="cie" style="left:637px;top:678px;width:340.5px;height:197px"><i style="height:3px;background:linear-gradient(90deg,#71ffc7 0px,#d9ffc2 202px,#fffdbf 270px,#ffd8a1 340px)"></i><i style="height:3px;background:linear-gradient(90deg,#72ffc9 0px,#dbffc4 202px,#fffcc0 268px,#ffd7a1 340px)"></i><i style="height:3px;background:linear-gradient(90deg,#73ffca 0px,#dbffc5 200px,#fffdc2 264px,#ffd5a2 340px)"></i><i style="height:3px;background:linear-gradient(90deg,#74ffcc 0px,#ddffc7 200px,#fffcc4 262px,#ffd4a2 340px)"></i><i style="height:3px;background:linear-gradient(90deg,#75ffcd 0px,#deffc9 200px,#fffdc6 258px,#ffd2a2 340px)"></i><i style="height:3px;background:linear-gradient(90deg,#76ffcf 0px,#dfffcb 198px,#fffdc7 256px,#ffd1a3 340px)"></i><i style="height:3px;background:linear-gradient(90deg,#77ffd1 0px,#e0ffcc 198px,#fffdc9 252px,#ffcfa3 340px)"></i><i style="height:3px;background:linear-gradient(90deg,#78ffd2 0px,#e1ffce 196px,#fffdcb 250px,#ffcea3 340px)"></i><i style="height:3px;background:linear-gradient(90deg,#79ffd4 0px,#e3ffd0 196px,#fffdcd 246px,#ffcca4 340px)"></i><i style="height:3px;background:linear-gradient(90deg,#7affd5 0px,#e3ffd1 194px,#fffdce 244px,#ffcba4 340px)"></i><i style="height:3px;background:linear-gradient(90deg,#7bffd7 0px,#e5ffd3 194px,#fffdd1 240px,#ffc9a4 340px)"></i><i style="height:3px;background:linear-gradient(90deg,#7dffd9 0px,#e5ffd5 192px,#fffdd2 238px,#ffc8a5 340px)"></i><i style="height:3px;background:linear-gradient(90deg,#7effda 0px,#e7ffd7 192px,#fffdd4 234px,#ffc7a6 338px,#ffc7a5 340px)"></i><i style="height:3px;background:linear-gradient(90deg,#7fffdc 0px,#e8ffd9 190px,#fffdd6 232px,#ffc7a7 336px,#ffc5a5 340px)"></i><i style="height:3px;background:linear-gradient(90deg,#80ffde 0px,#e9ffdb 190px,#fffdd8 228px,#ffc7a8 332px,#ffc4a5 340px)"></i><i style="height:3px;background:linear-gradient(90deg,#81ffdf 0px,#ebffdc 190px,#fffdda 226px,#ffc7aa 330px,#ffc2a6 340px)"></i><i style="height:3px;background:linear-gradient(90deg,#82ffe1 0px,#ecffde 188px,#fffddc 222px,#ffc8ac 324px,#ffc1a6 340px)"></i><i style="height:3px;background:linear-gradient(90deg,#83ffe3 0px,#edffe0 188px,#fffddd 220px,#ffc7ad 322px,#ffbfa6 340px)"></i><i style="height:3px;background:linear-gradient(90deg,#85ffe4 0px,#eeffe2 186px,#fffde0 216px,#ffc7af 318px,#ffbea7 340px)"></i><i style="height:3px;background:linear-gradient(90deg,#86ffe6 0px,#f0ffe4 186px,#fffde1 214px,#ffc7b0 316px,#ffbda7 340px)"></i><i style="height:3px;background:linear-gradient(90deg,#87ffe8 0px,#f0ffe6 184px,#fffce3 212px,#ffc6b1 314px,#ffbba7 340px)"></i><i style="height:3px;background:linear-gradient(90deg,#88ffea 0px,#f2ffe8 184px,#fffde5 208px,#ffc7b3 310px,#ffbaa8 340px)"></i><i style="height:3px;background:linear-gradient(90deg,#89ffeb 0px,#f3ffea 182px,#fffce7 206px,#ffc6b4 308px,#ffb9a8 340px)"></i><i style="height:3px;background:linear-gradient(90deg,#8bffed 0px,#f5ffec 182px,#fffde9 202px,#ffc7b7 302px,#ffb7a8 340px)"></i><i style="height:3px;background:linear-gradient(90deg,#8cffef 0px,#f6ffee 182px,#fffceb 200px,#ffc7b8 300px,#ffb6a9 340px)"></i><i style="height:3px;background:linear-gradient(90deg,#8dfff1 0px,#f7fff0 180px,#fffded 196px,#ffc7ba 296px,#ffb5a9 340px)"></i><i style="height:3px;background:linear-gradient(90deg,#8efff3 0px,#f9fff2 180px,#fffbee 196px,#ffc5bb 296px,#ffb3a9 340px)"></i><i style="height:3px;background:linear-gradient(90deg,#90fff5 0px,#fafff4 178px,#fffbf0 192px,#ffc6bd 292px,#ffb2a9 340px)"></i><i style="height:3px;background:linear-gradient(90deg,#91fff6 0px,#fcfff6 178px,#fff6ed 198px,#ffc1b9 300px,#ffb1aa 340px)"></i><i style="height:3px;background:linear-gradient(90deg,#92fff8 0px,#fcfff8 176px,#ffe2dc 228px,#ffafaa 340px)"></i><i style="height:3px;background:linear-gradient(90deg,#94fffa 0px,#fffdf8 180px,#ffc7c4 278px,#ffaeaa 340px)"></i><i style="height:3px;background:linear-gradient(90deg,#95fffc 0px,#fffdfa 178px,#ffc7c5 276px,#ffadab 340px)"></i><i style="height:3px;background:linear-gradient(90deg,#96fffe 0px,#fffdfd 174px,#ffc7c7 272px,#ffabab 340px)"></i><i style="height:3px;background:linear-gradient(90deg,#97feff 0px,#fffbfd 174px,#ffc6c7 272px,#ffaaab 340px)"></i><i style="height:3px;background:linear-gradient(90deg,#97fcff 0px,#fff9fd 174px,#ffc4c7 272px,#ffa9ac 340px)"></i><i style="height:3px;background:linear-gradient(90deg,#97faff 0px,#fff7fd 174px,#ffc3c8 272px,#ffa7ac 340px)"></i><i style="height:3px;background:linear-gradient(90deg,#98f8ff 0px,#fff5fd 174px,#ffc1c8 272px,#ffa6ac 340px)"></i><i style="height:3px;background:linear-gradient(90deg,#98f6ff 0px,#fff3fd 174px,#ffbfc7 274px,#ffa5ac 340px)"></i><i style="height:3px;background:linear-gradient(90deg,#98f4ff 0px,#fff2fe 174px,#ffbdc7 274px,#ffa4ad 340px)"></i><i style="height:3px;background:linear-gradient(90deg,#98f2ff 0px,#fff0fe 174px,#ffbcc8 274px,#ffa2ad 340px)"></i><i style="height:3px;background:linear-gradient(90deg,#98f0ff 0px,#ffecfd 176px,#ffbac7 276px,#ffa1ad 340px)"></i><i style="height:3px;background:linear-gradient(90deg,#98efff 0px,#ffebfd 176px,#ffb8c7 276px,#ffa0ad 340px)"></i><i style="height:3px;background:linear-gradient(90deg,#99edff 0px,#ffe9fd 176px,#ffb7c8 276px,#ff9eae 340px)"></i><i style="height:3px;background:linear-gradient(90deg,#99ebff 0px,#ffe7fd 176px,#ffb4c7 278px,#ff9dae 340px)"></i><i style="height:3px;background:linear-gradient(90deg,#99e9ff 0px,#ffe5fd 176px,#ffb3c7 278px,#ff9cae 340px)"></i><i style="height:3px;background:linear-gradient(90deg,#99e7ff 0px,#ffe3fd 176px,#ffb2c7 278px,#ff9baf 340px)"></i><i style="height:3px;background:linear-gradient(90deg,#99e5ff 0px,#ffe1fd 176px,#ffb0c8 278px,#ff99af 340px)"></i><i style="height:3px;background:linear-gradient(90deg,#99e4ff 0px,#ffe0fe 176px,#ffafc8 278px,#ff98af 340px)"></i><i style="height:3px;background:linear-gradient(90deg,#9ae2ff 0px,#ffddfc 178px,#ffacc6 282px,#ff97af 340px)"></i><i style="height:3px;background:linear-gradient(90deg,#9ae0ff 0px,#ffdbfd 178px,#ffaac7 282px,#ff96b0 340px)"></i><i style="height:3px;background:linear-gradient(90deg,#9adeff 0px,#ffd9fd 178px,#ffa9c7 282px,#ff95b0 340px)"></i><i style="height:3px;background:linear-gradient(90deg,#9adcff 0px,#ffd7fd 178px,#ffa8c7 282px,#ff93b0 340px)"></i><i style="height:3px;background:linear-gradient(90deg,#9adbff 0px,#ffd5fd 178px,#ffa6c7 282px,#ff92b1 340px)"></i><i style="height:3px;background:linear-gradient(90deg,#9ad9ff 0px,#ffd4fd 178px,#ffa5c8 282px,#ff91b1 340px)"></i><i style="height:3px;background:linear-gradient(90deg,#9bd7ff 0px,#ffd2fd 178px,#ffa4c8 282px,#ff90b1 340px)"></i><i style="height:3px;background:linear-gradient(90deg,#9bd5ff 0px,#ffd0fe 178px,#ffa2c8 282px,#ff8fb1 340px)"></i><i style="height:3px;background:linear-gradient(90deg,#9bd4ff 0px,#ffcdfc 180px,#ff9fc7 286px,#ff8db2 340px)"></i><i style="height:3px;background:linear-gradient(90deg,#9bd2ff 0px,#ffccfd 180px,#ff9ec7 286px,#ff8cb2 340px)"></i><i style="height:3px;background:linear-gradient(90deg,#9bd0ff 0px,#ffcafd 180px,#ff9dc7 286px,#ff8bb2 340px)"></i><i style="height:3px;background:linear-gradient(90deg,#9bcfff 0px,#ffc8fd 180px,#ff9bc7 286px,#ff8ab2 340px)"></i><i style="height:3px;background:linear-gradient(90deg,#9ccdff 0px,#ffc7fd 180px,#ff9ac8 286px,#ff89b3 340px)"></i><i style="height:3px;background:linear-gradient(90deg,#9ccbff 0px,#ffc5fd 180px,#ff99c8 286px,#ff88b3 340px)"></i><i style="height:3px;background:linear-gradient(90deg,#9ccaff 0px,#ffc3fd 180px,#ff97c7 288px,#ff86b3 340px)"></i><i style="height:3px;background:linear-gradient(90deg,#9cc8ff 0px,#ffc2fd 180px,#ff96c7 288px,#ff85b3 340px)"></i><i style="height:3px;background:linear-gradient(90deg,#9cc6ff 0px,#ffbffc 182px,#ff94c7 290px,#ff84b4 340px)"></i><i style="height:3px;background:linear-gradient(90deg,#9cc5ff 0px,#ffbdfd 182px,#ff92c7 290px,#ff83b4 340px)"></i></div>
<svg width="1668" height="1005" viewBox="0 0 1668 1005">
<circle cx="1151.3" cy="149.6" r="4.3" fill="#00bc00" stroke="#111" stroke-width="1.2"/>
<rect x="1143.6" y="142.6" width="13.8" height="13.8" fill="none" stroke="#f4f4f4" stroke-width="1.5"/>
<circle cx="1235.5" cy="157.4" r="4.3" fill="#c8c000" stroke="#111" stroke-width="1.2"/>
<rect x="1227.7" y="150.5" width="13.8" height="13.8" fill="none" stroke="#f4f4f4" stroke-width="1.5"/>
<circle cx="1494.8" cy="182.1" r="4.3" fill="#c00000" stroke="#111" stroke-width="1.2"/>
<rect x="1490.6" y="175.1" width="13.8" height="13.8" fill="none" stroke="#f4f4f4" stroke-width="1.5"/>
<circle cx="1165" cy="237.7" r="4.3" fill="#00bcbc" stroke="#111" stroke-width="1.2"/>
<rect x="1158.5" y="230.7" width="13.8" height="13.8" fill="none" stroke="#f4f4f4" stroke-width="1.5"/>
<circle cx="1342" cy="339" r="4.3" fill="#a000a0" stroke="#111" stroke-width="1.2"/>
<rect x="1335.6" y="332.1" width="13.8" height="13.8" fill="none" stroke="#f4f4f4" stroke-width="1.5"/>
<circle cx="1206" cy="478" r="4.3" fill="#0000a0" stroke="#111" stroke-width="1.2"/>
<rect x="1197.6" y="474.6" width="13.8" height="13.8" fill="none" stroke="#f4f4f4" stroke-width="1.5"/>
<rect x="1221.1" y="219.9" width="13" height="13" fill="none" stroke="#000000" stroke-width="2"/>
<circle cx="1229" cy="227" r="5" fill="#ffffff" stroke="#222" stroke-width="1.1"/>
<rect x="1402" y="580" width="251.5" height="27" fill="#303030" />
<text x="1403" y="600.7" font-size="19" fill="#f0f0f0" textLength="155.3" lengthAdjust="spacingAndGlyphs" >Gamut Coverage:</text>
<text x="1569.6" y="600.7" font-size="19" fill="#f0f0f0" textLength="54.4" lengthAdjust="spacingAndGlyphs" >98,7%</text>
<rect x="798.95" y="768.25" width="14.5" height="14.5" fill="none" stroke="#000000" stroke-width="2"/>
<circle cx="812" cy="777.6" r="5.6" fill="#e8e8e8" stroke="#222" stroke-width="1.2"/>
</svg>
</body></html>
